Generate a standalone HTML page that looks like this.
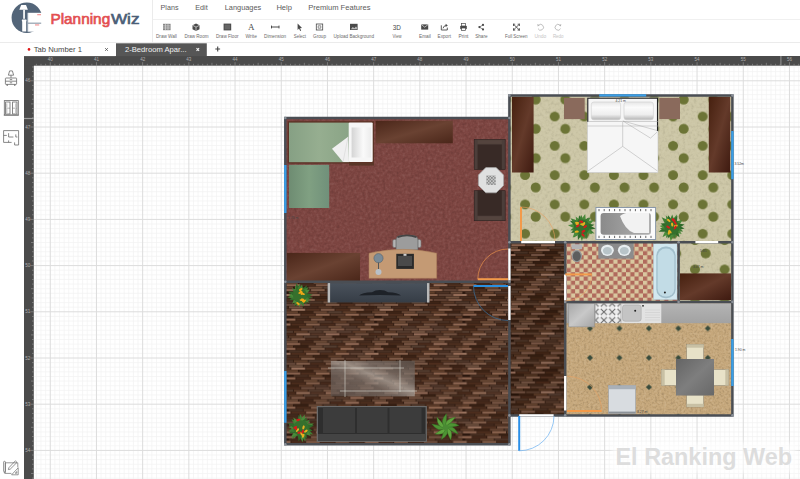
<!DOCTYPE html>
<html><head><meta charset="utf-8"><title>PlanningWiz</title>
<style>
html,body{margin:0;padding:0;width:800px;height:479px;overflow:hidden;background:#fff}
svg{display:block;position:absolute;left:0;top:0}
text{font-family:"Liberation Sans",sans-serif}
</style></head><body>
<svg width="800" height="479" viewBox="0 0 800 479">
<defs>

<pattern id="dots" patternUnits="userSpaceOnUse" x="525.1" y="175.1" width="29.6" height="29.3">
<circle cx="0" cy="0" r="5" fill="#6c7436"/><circle cx="29.6" cy="0" r="5" fill="#6c7436"/><circle cx="0" cy="29.3" r="5" fill="#6c7436"/><circle cx="29.6" cy="29.3" r="5" fill="#6c7436"/>
<circle cx="10.6" cy="12.4" r="5" fill="#6c7436"/>
</pattern>
<pattern id="dots2" patternUnits="userSpaceOnUse" x="695" y="269.4" width="29.6" height="29.3">
<circle cx="0" cy="0" r="5" fill="#6c7436"/><circle cx="29.6" cy="0" r="5" fill="#6c7436"/><circle cx="0" cy="29.3" r="5" fill="#6c7436"/><circle cx="29.6" cy="29.3" r="5" fill="#6c7436"/>
<circle cx="10.7" cy="13.4" r="5" fill="#6c7436"/><circle cx="10.7" cy="-15.9" r="5" fill="#6c7436"/>
</pattern>
<pattern id="check" patternUnits="userSpaceOnUse" x="566.66" y="238.31" width="8.48" height="8.48">
<rect width="8.48" height="8.48" fill="#b06a5c"/><rect width="4.24" height="4.24" fill="#d9c79f"/><rect x="4.24" y="4.24" width="4.24" height="4.24" fill="#d9c79f"/>
</pattern>
<pattern id="sand" patternUnits="userSpaceOnUse" x="590" y="328.4" width="29.45" height="29.4">

<path d="M0 -3 L3 0 L0 3 L-3 0Z M29.45 -3 L32.45 0 L29.45 3 L26.45 0Z M0 26.4 L3 29.4 L0 32.4 L-3 29.4Z M29.45 26.4 L32.45 29.4 L29.45 32.4 L26.45 29.4Z" fill="#3a4c3c"/>
</pattern>
<pattern id="parq" patternUnits="userSpaceOnUse" x="286" y="284" width="88.19999999999999" height="58.8"><rect width="88.19999999999999" height="58.8" fill="#2a170e"/><rect x="-29.00" y="0.20" width="13.9" height="2.10" fill="#7a5745"/><rect x="-14.30" y="0.20" width="13.9" height="2.10" fill="#513222"/><rect x="-21.65" y="2.65" width="13.9" height="2.10" fill="#3c2315"/><rect x="-6.95" y="2.65" width="13.9" height="2.10" fill="#62402c"/><rect x="0.40" y="0.20" width="13.9" height="2.10" fill="#8d6550"/><rect x="15.10" y="0.20" width="13.9" height="2.10" fill="#472a1b"/><rect x="7.75" y="2.65" width="13.9" height="2.10" fill="#372013"/><rect x="22.45" y="2.65" width="13.9" height="2.10" fill="#6a4a37"/><rect x="29.80" y="0.20" width="13.9" height="2.10" fill="#7b5846"/><rect x="44.50" y="0.20" width="13.9" height="2.10" fill="#4a2b1c"/><rect x="37.15" y="2.65" width="13.9" height="2.10" fill="#543e31"/><rect x="51.85" y="2.65" width="13.9" height="2.10" fill="#5e3c29"/><rect x="59.20" y="0.20" width="13.9" height="2.10" fill="#966d58"/><rect x="73.90" y="0.20" width="13.9" height="2.10" fill="#4e2f1f"/><rect x="66.55" y="2.65" width="13.9" height="2.10" fill="#452c1f"/><rect x="81.25" y="2.65" width="13.9" height="2.10" fill="#573826"/><rect x="88.60" y="0.20" width="13.9" height="2.10" fill="#8e6550"/><rect x="103.30" y="0.20" width="13.9" height="2.10" fill="#5e4132"/><rect x="95.95" y="2.65" width="13.9" height="2.10" fill="#402719"/><rect x="110.65" y="2.65" width="13.9" height="2.10" fill="#664633"/><rect x="-4.50" y="5.10" width="13.9" height="2.10" fill="#8f6651"/><rect x="10.20" y="5.10" width="13.9" height="2.10" fill="#472a1b"/><rect x="2.85" y="7.55" width="13.9" height="2.10" fill="#4a3225"/><rect x="17.55" y="7.55" width="13.9" height="2.10" fill="#613f2c"/><rect x="24.90" y="5.10" width="13.9" height="2.10" fill="#7d5a47"/><rect x="39.60" y="5.10" width="13.9" height="2.10" fill="#46291b"/><rect x="32.25" y="7.55" width="13.9" height="2.10" fill="#4f372b"/><rect x="46.95" y="7.55" width="13.9" height="2.10" fill="#5e3d29"/><rect x="54.30" y="5.10" width="13.9" height="2.10" fill="#926852"/><rect x="69.00" y="5.10" width="13.9" height="2.10" fill="#5e4133"/><rect x="61.65" y="7.55" width="13.9" height="2.10" fill="#493023"/><rect x="76.35" y="7.55" width="13.9" height="2.10" fill="#6d4d3b"/><rect x="83.70" y="5.10" width="13.9" height="2.10" fill="#825d49"/><rect x="98.40" y="5.10" width="13.9" height="2.10" fill="#5b3d2f"/><rect x="91.05" y="7.55" width="13.9" height="2.10" fill="#3d2315"/><rect x="105.75" y="7.55" width="13.9" height="2.10" fill="#6d4e3c"/><rect x="113.10" y="5.10" width="13.9" height="2.10" fill="#986f5a"/><rect x="127.80" y="5.10" width="13.9" height="2.10" fill="#472a1b"/><rect x="120.45" y="7.55" width="13.9" height="2.10" fill="#392114"/><rect x="135.15" y="7.55" width="13.9" height="2.10" fill="#593926"/><rect x="-9.40" y="10.00" width="13.9" height="2.10" fill="#9b745f"/><rect x="5.30" y="10.00" width="13.9" height="2.10" fill="#4d2d1d"/><rect x="-2.05" y="12.45" width="13.9" height="2.10" fill="#452c1e"/><rect x="12.65" y="12.45" width="13.9" height="2.10" fill="#5a3a27"/><rect x="20.00" y="10.00" width="13.9" height="2.10" fill="#87614d"/><rect x="34.70" y="10.00" width="13.9" height="2.10" fill="#4c2d1d"/><rect x="27.35" y="12.45" width="13.9" height="2.10" fill="#3c2315"/><rect x="42.05" y="12.45" width="13.9" height="2.10" fill="#613f2b"/><rect x="49.40" y="10.00" width="13.9" height="2.10" fill="#8b634f"/><rect x="64.10" y="10.00" width="13.9" height="2.10" fill="#5f4234"/><rect x="56.75" y="12.45" width="13.9" height="2.10" fill="#472e21"/><rect x="71.45" y="12.45" width="13.9" height="2.10" fill="#6d4e3b"/><rect x="78.80" y="10.00" width="13.9" height="2.10" fill="#976e59"/><rect x="93.50" y="10.00" width="13.9" height="2.10" fill="#624638"/><rect x="86.15" y="12.45" width="13.9" height="2.10" fill="#472e21"/><rect x="100.85" y="12.45" width="13.9" height="2.10" fill="#573826"/><rect x="108.20" y="10.00" width="13.9" height="2.10" fill="#976f59"/><rect x="122.90" y="10.00" width="13.9" height="2.10" fill="#614537"/><rect x="115.55" y="12.45" width="13.9" height="2.10" fill="#51392d"/><rect x="130.25" y="12.45" width="13.9" height="2.10" fill="#603f2b"/><rect x="-14.30" y="14.90" width="13.9" height="2.10" fill="#916852"/><rect x="0.40" y="14.90" width="13.9" height="2.10" fill="#492b1c"/><rect x="-6.95" y="17.35" width="13.9" height="2.10" fill="#4e3629"/><rect x="7.75" y="17.35" width="13.9" height="2.10" fill="#603f2b"/><rect x="15.10" y="14.90" width="13.9" height="2.10" fill="#7c5946"/><rect x="29.80" y="14.90" width="13.9" height="2.10" fill="#472a1b"/><rect x="22.45" y="17.35" width="13.9" height="2.10" fill="#4e372a"/><rect x="37.15" y="17.35" width="13.9" height="2.10" fill="#6f503e"/><rect x="44.50" y="14.90" width="13.9" height="2.10" fill="#735241"/><rect x="59.20" y="14.90" width="13.9" height="2.10" fill="#5b3d2f"/><rect x="51.85" y="17.35" width="13.9" height="2.10" fill="#3d2315"/><rect x="66.55" y="17.35" width="13.9" height="2.10" fill="#573826"/><rect x="73.90" y="14.90" width="13.9" height="2.10" fill="#7d5947"/><rect x="88.60" y="14.90" width="13.9" height="2.10" fill="#5a3c2d"/><rect x="81.25" y="17.35" width="13.9" height="2.10" fill="#4f382b"/><rect x="95.95" y="17.35" width="13.9" height="2.10" fill="#553725"/><rect x="103.30" y="14.90" width="13.9" height="2.10" fill="#8d6450"/><rect x="118.00" y="14.90" width="13.9" height="2.10" fill="#46291b"/><rect x="110.65" y="17.35" width="13.9" height="2.10" fill="#493023"/><rect x="125.35" y="17.35" width="13.9" height="2.10" fill="#5b3b28"/><rect x="-19.20" y="19.80" width="13.9" height="2.10" fill="#98705a"/><rect x="-4.50" y="19.80" width="13.9" height="2.10" fill="#624638"/><rect x="-11.85" y="22.25" width="13.9" height="2.10" fill="#402618"/><rect x="2.85" y="22.25" width="13.9" height="2.10" fill="#6f513f"/><rect x="10.20" y="19.80" width="13.9" height="2.10" fill="#7e5a47"/><rect x="24.90" y="19.80" width="13.9" height="2.10" fill="#472a1b"/><rect x="17.55" y="22.25" width="13.9" height="2.10" fill="#442a1d"/><rect x="32.25" y="22.25" width="13.9" height="2.10" fill="#553625"/><rect x="39.60" y="19.80" width="13.9" height="2.10" fill="#785644"/><rect x="54.30" y="19.80" width="13.9" height="2.10" fill="#4d2d1d"/><rect x="46.95" y="22.25" width="13.9" height="2.10" fill="#442b1d"/><rect x="61.65" y="22.25" width="13.9" height="2.10" fill="#573826"/><rect x="69.00" y="19.80" width="13.9" height="2.10" fill="#715040"/><rect x="83.70" y="19.80" width="13.9" height="2.10" fill="#5e4132"/><rect x="76.35" y="22.25" width="13.9" height="2.10" fill="#3c2215"/><rect x="91.05" y="22.25" width="13.9" height="2.10" fill="#6e4f3d"/><rect x="98.40" y="19.80" width="13.9" height="2.10" fill="#98705b"/><rect x="113.10" y="19.80" width="13.9" height="2.10" fill="#4c2d1d"/><rect x="105.75" y="22.25" width="13.9" height="2.10" fill="#3e2416"/><rect x="120.45" y="22.25" width="13.9" height="2.10" fill="#5f3d29"/><rect x="-24.10" y="24.70" width="13.9" height="2.10" fill="#8e6650"/><rect x="-9.40" y="24.70" width="13.9" height="2.10" fill="#533424"/><rect x="-16.75" y="27.15" width="13.9" height="2.10" fill="#42291b"/><rect x="-2.05" y="27.15" width="13.9" height="2.10" fill="#62412d"/><rect x="5.30" y="24.70" width="13.9" height="2.10" fill="#9a735e"/><rect x="20.00" y="24.70" width="13.9" height="2.10" fill="#503020"/><rect x="12.65" y="27.15" width="13.9" height="2.10" fill="#3d2315"/><rect x="27.35" y="27.15" width="13.9" height="2.10" fill="#664532"/><rect x="34.70" y="24.70" width="13.9" height="2.10" fill="#7a5745"/><rect x="49.40" y="24.70" width="13.9" height="2.10" fill="#4b2c1c"/><rect x="42.05" y="27.15" width="13.9" height="2.10" fill="#543d30"/><rect x="56.75" y="27.15" width="13.9" height="2.10" fill="#5f3d29"/><rect x="64.10" y="24.70" width="13.9" height="2.10" fill="#89624e"/><rect x="78.80" y="24.70" width="13.9" height="2.10" fill="#46291b"/><rect x="71.45" y="27.15" width="13.9" height="2.10" fill="#3d2315"/><rect x="86.15" y="27.15" width="13.9" height="2.10" fill="#613f2b"/><rect x="93.50" y="24.70" width="13.9" height="2.10" fill="#6f503f"/><rect x="108.20" y="24.70" width="13.9" height="2.10" fill="#543525"/><rect x="100.85" y="27.15" width="13.9" height="2.10" fill="#452c1f"/><rect x="115.55" y="27.15" width="13.9" height="2.10" fill="#553725"/><rect x="0.40" y="29.60" width="13.9" height="2.10" fill="#8d6550"/><rect x="15.10" y="29.60" width="13.9" height="2.10" fill="#4e2e1e"/><rect x="7.75" y="32.05" width="13.9" height="2.10" fill="#472e21"/><rect x="22.45" y="32.05" width="13.9" height="2.10" fill="#5b3b28"/><rect x="29.80" y="29.60" width="13.9" height="2.10" fill="#916852"/><rect x="44.50" y="29.60" width="13.9" height="2.10" fill="#593b2c"/><rect x="37.15" y="32.05" width="13.9" height="2.10" fill="#382013"/><rect x="51.85" y="32.05" width="13.9" height="2.10" fill="#553725"/><rect x="59.20" y="29.60" width="13.9" height="2.10" fill="#906751"/><rect x="73.90" y="29.60" width="13.9" height="2.10" fill="#614537"/><rect x="66.55" y="32.05" width="13.9" height="2.10" fill="#3b2215"/><rect x="81.25" y="32.05" width="13.9" height="2.10" fill="#5e3c29"/><rect x="88.60" y="29.60" width="13.9" height="2.10" fill="#8b644f"/><rect x="103.30" y="29.60" width="13.9" height="2.10" fill="#4b2c1d"/><rect x="95.95" y="32.05" width="13.9" height="2.10" fill="#3c2315"/><rect x="110.65" y="32.05" width="13.9" height="2.10" fill="#5b3a27"/><rect x="118.00" y="29.60" width="13.9" height="2.10" fill="#815c49"/><rect x="132.70" y="29.60" width="13.9" height="2.10" fill="#533424"/><rect x="125.35" y="32.05" width="13.9" height="2.10" fill="#3b2215"/><rect x="140.05" y="32.05" width="13.9" height="2.10" fill="#5c3b28"/><rect x="-4.50" y="34.50" width="13.9" height="2.10" fill="#946a54"/><rect x="10.20" y="34.50" width="13.9" height="2.10" fill="#46291b"/><rect x="2.85" y="36.95" width="13.9" height="2.10" fill="#42291b"/><rect x="17.55" y="36.95" width="13.9" height="2.10" fill="#664632"/><rect x="24.90" y="34.50" width="13.9" height="2.10" fill="#7e5a47"/><rect x="39.60" y="34.50" width="13.9" height="2.10" fill="#4a2b1c"/><rect x="32.25" y="36.95" width="13.9" height="2.10" fill="#4c3427"/><rect x="46.95" y="36.95" width="13.9" height="2.10" fill="#593927"/><rect x="54.30" y="34.50" width="13.9" height="2.10" fill="#785644"/><rect x="69.00" y="34.50" width="13.9" height="2.10" fill="#4d2d1d"/><rect x="61.65" y="36.95" width="13.9" height="2.10" fill="#482f22"/><rect x="76.35" y="36.95" width="13.9" height="2.10" fill="#563725"/><rect x="83.70" y="34.50" width="13.9" height="2.10" fill="#7e5a47"/><rect x="98.40" y="34.50" width="13.9" height="2.10" fill="#4b2c1d"/><rect x="91.05" y="36.95" width="13.9" height="2.10" fill="#4e3629"/><rect x="105.75" y="36.95" width="13.9" height="2.10" fill="#5d3c29"/><rect x="113.10" y="34.50" width="13.9" height="2.10" fill="#976e59"/><rect x="127.80" y="34.50" width="13.9" height="2.10" fill="#492b1c"/><rect x="120.45" y="36.95" width="13.9" height="2.10" fill="#3c2315"/><rect x="135.15" y="36.95" width="13.9" height="2.10" fill="#63422e"/><rect x="-9.40" y="39.40" width="13.9" height="2.10" fill="#98705b"/><rect x="5.30" y="39.40" width="13.9" height="2.10" fill="#4d2d1d"/><rect x="-2.05" y="41.85" width="13.9" height="2.10" fill="#3a2214"/><rect x="12.65" y="41.85" width="13.9" height="2.10" fill="#573826"/><rect x="20.00" y="39.40" width="13.9" height="2.10" fill="#88624d"/><rect x="34.70" y="39.40" width="13.9" height="2.10" fill="#492b1c"/><rect x="27.35" y="41.85" width="13.9" height="2.10" fill="#4c3428"/><rect x="42.05" y="41.85" width="13.9" height="2.10" fill="#6a4a37"/><rect x="49.40" y="39.40" width="13.9" height="2.10" fill="#775544"/><rect x="64.10" y="39.40" width="13.9" height="2.10" fill="#4a2c1c"/><rect x="56.75" y="41.85" width="13.9" height="2.10" fill="#4c3428"/><rect x="71.45" y="41.85" width="13.9" height="2.10" fill="#63422e"/><rect x="78.80" y="39.40" width="13.9" height="2.10" fill="#956c56"/><rect x="93.50" y="39.40" width="13.9" height="2.10" fill="#4c2c1d"/><rect x="86.15" y="41.85" width="13.9" height="2.10" fill="#392114"/><rect x="100.85" y="41.85" width="13.9" height="2.10" fill="#5a3a27"/><rect x="108.20" y="39.40" width="13.9" height="2.10" fill="#956b56"/><rect x="122.90" y="39.40" width="13.9" height="2.10" fill="#4a2c1c"/><rect x="115.55" y="41.85" width="13.9" height="2.10" fill="#3c2315"/><rect x="130.25" y="41.85" width="13.9" height="2.10" fill="#5d3c28"/><rect x="-14.30" y="44.30" width="13.9" height="2.10" fill="#835e4a"/><rect x="0.40" y="44.30" width="13.9" height="2.10" fill="#4d2d1d"/><rect x="-6.95" y="46.75" width="13.9" height="2.10" fill="#513a2d"/><rect x="7.75" y="46.75" width="13.9" height="2.10" fill="#573826"/><rect x="15.10" y="44.30" width="13.9" height="2.10" fill="#6f4f3f"/><rect x="29.80" y="44.30" width="13.9" height="2.10" fill="#614436"/><rect x="22.45" y="46.75" width="13.9" height="2.10" fill="#50382b"/><rect x="37.15" y="46.75" width="13.9" height="2.10" fill="#6f503e"/><rect x="44.50" y="44.30" width="13.9" height="2.10" fill="#845e4b"/><rect x="59.20" y="44.30" width="13.9" height="2.10" fill="#614436"/><rect x="51.85" y="46.75" width="13.9" height="2.10" fill="#523a2e"/><rect x="66.55" y="46.75" width="13.9" height="2.10" fill="#593927"/><rect x="73.90" y="44.30" width="13.9" height="2.10" fill="#936953"/><rect x="88.60" y="44.30" width="13.9" height="2.10" fill="#5c3f30"/><rect x="81.25" y="46.75" width="13.9" height="2.10" fill="#462e20"/><rect x="95.95" y="46.75" width="13.9" height="2.10" fill="#5f3d29"/><rect x="103.30" y="44.30" width="13.9" height="2.10" fill="#7d5947"/><rect x="118.00" y="44.30" width="13.9" height="2.10" fill="#4c2c1d"/><rect x="110.65" y="46.75" width="13.9" height="2.10" fill="#3a2214"/><rect x="125.35" y="46.75" width="13.9" height="2.10" fill="#553725"/><rect x="-19.20" y="49.20" width="13.9" height="2.10" fill="#8b644f"/><rect x="-4.50" y="49.20" width="13.9" height="2.10" fill="#4b2c1c"/><rect x="-11.85" y="51.65" width="13.9" height="2.10" fill="#4d3528"/><rect x="2.85" y="51.65" width="13.9" height="2.10" fill="#553725"/><rect x="10.20" y="49.20" width="13.9" height="2.10" fill="#99715c"/><rect x="24.90" y="49.20" width="13.9" height="2.10" fill="#573829"/><rect x="17.55" y="51.65" width="13.9" height="2.10" fill="#513a2e"/><rect x="32.25" y="51.65" width="13.9" height="2.10" fill="#6c4c3a"/><rect x="39.60" y="49.20" width="13.9" height="2.10" fill="#99705c"/><rect x="54.30" y="49.20" width="13.9" height="2.10" fill="#523324"/><rect x="46.95" y="51.65" width="13.9" height="2.10" fill="#372013"/><rect x="61.65" y="51.65" width="13.9" height="2.10" fill="#664633"/><rect x="69.00" y="49.20" width="13.9" height="2.10" fill="#775543"/><rect x="83.70" y="49.20" width="13.9" height="2.10" fill="#4b2c1c"/><rect x="76.35" y="51.65" width="13.9" height="2.10" fill="#462e20"/><rect x="91.05" y="51.65" width="13.9" height="2.10" fill="#5f3d29"/><rect x="98.40" y="49.20" width="13.9" height="2.10" fill="#835d4a"/><rect x="113.10" y="49.20" width="13.9" height="2.10" fill="#604435"/><rect x="105.75" y="51.65" width="13.9" height="2.10" fill="#442b1e"/><rect x="120.45" y="51.65" width="13.9" height="2.10" fill="#5b3b28"/><rect x="-24.10" y="54.10" width="13.9" height="2.10" fill="#7b5845"/><rect x="-9.40" y="54.10" width="13.9" height="2.10" fill="#5d4032"/><rect x="-16.75" y="56.55" width="13.9" height="2.10" fill="#3e2517"/><rect x="-2.05" y="56.55" width="13.9" height="2.10" fill="#684835"/><rect x="5.30" y="54.10" width="13.9" height="2.10" fill="#805b48"/><rect x="20.00" y="54.10" width="13.9" height="2.10" fill="#492b1c"/><rect x="12.65" y="56.55" width="13.9" height="2.10" fill="#41271a"/><rect x="27.35" y="56.55" width="13.9" height="2.10" fill="#694936"/><rect x="34.70" y="54.10" width="13.9" height="2.10" fill="#775543"/><rect x="49.40" y="54.10" width="13.9" height="2.10" fill="#5b3d2e"/><rect x="42.05" y="56.55" width="13.9" height="2.10" fill="#513a2d"/><rect x="56.75" y="56.55" width="13.9" height="2.10" fill="#694936"/><rect x="64.10" y="54.10" width="13.9" height="2.10" fill="#966d57"/><rect x="78.80" y="54.10" width="13.9" height="2.10" fill="#46291b"/><rect x="71.45" y="56.55" width="13.9" height="2.10" fill="#452c1e"/><rect x="86.15" y="56.55" width="13.9" height="2.10" fill="#6b4b38"/><rect x="93.50" y="54.10" width="13.9" height="2.10" fill="#715140"/><rect x="108.20" y="54.10" width="13.9" height="2.10" fill="#4a2c1c"/><rect x="100.85" y="56.55" width="13.9" height="2.10" fill="#3b2215"/><rect x="115.55" y="56.55" width="13.9" height="2.10" fill="#5f3d29"/></pattern>
<pattern id="parq2" patternUnits="userSpaceOnUse" x="511" y="244" width="88.19999999999999" height="58.8"><rect width="88.19999999999999" height="58.8" fill="#26140a"/><rect x="-29.00" y="0.20" width="13.9" height="2.10" fill="#855f4c"/><rect x="-14.30" y="0.20" width="13.9" height="2.10" fill="#513526"/><rect x="-21.65" y="2.65" width="13.9" height="2.10" fill="#463023"/><rect x="-6.95" y="2.65" width="13.9" height="2.10" fill="#684b38"/><rect x="0.40" y="0.20" width="13.9" height="2.10" fill="#8b634f"/><rect x="15.10" y="0.20" width="13.9" height="2.10" fill="#593e2f"/><rect x="7.75" y="2.65" width="13.9" height="2.10" fill="#321d10"/><rect x="22.45" y="2.65" width="13.9" height="2.10" fill="#583825"/><rect x="29.80" y="0.20" width="13.9" height="2.10" fill="#936d5a"/><rect x="44.50" y="0.20" width="13.9" height="2.10" fill="#4d3121"/><rect x="37.15" y="2.65" width="13.9" height="2.10" fill="#4b3529"/><rect x="51.85" y="2.65" width="13.9" height="2.10" fill="#513422"/><rect x="59.20" y="0.20" width="13.9" height="2.10" fill="#7e5a48"/><rect x="73.90" y="0.20" width="13.9" height="2.10" fill="#422616"/><rect x="66.55" y="2.65" width="13.9" height="2.10" fill="#3b2416"/><rect x="81.25" y="2.65" width="13.9" height="2.10" fill="#5b3b27"/><rect x="88.60" y="0.20" width="13.9" height="2.10" fill="#694b3c"/><rect x="103.30" y="0.20" width="13.9" height="2.10" fill="#422516"/><rect x="95.95" y="2.65" width="13.9" height="2.10" fill="#351e11"/><rect x="110.65" y="2.65" width="13.9" height="2.10" fill="#674a37"/><rect x="-4.50" y="5.10" width="13.9" height="2.10" fill="#8c6450"/><rect x="10.20" y="5.10" width="13.9" height="2.10" fill="#412516"/><rect x="2.85" y="7.55" width="13.9" height="2.10" fill="#463023"/><rect x="17.55" y="7.55" width="13.9" height="2.10" fill="#513422"/><rect x="24.90" y="5.10" width="13.9" height="2.10" fill="#855f4c"/><rect x="39.60" y="5.10" width="13.9" height="2.10" fill="#402516"/><rect x="32.25" y="7.55" width="13.9" height="2.10" fill="#321c10"/><rect x="46.95" y="7.55" width="13.9" height="2.10" fill="#654835"/><rect x="54.30" y="5.10" width="13.9" height="2.10" fill="#725141"/><rect x="69.00" y="5.10" width="13.9" height="2.10" fill="#422516"/><rect x="61.65" y="7.55" width="13.9" height="2.10" fill="#4f392d"/><rect x="76.35" y="7.55" width="13.9" height="2.10" fill="#654835"/><rect x="83.70" y="5.10" width="13.9" height="2.10" fill="#765443"/><rect x="98.40" y="5.10" width="13.9" height="2.10" fill="#5a3f31"/><rect x="91.05" y="7.55" width="13.9" height="2.10" fill="#3b2416"/><rect x="105.75" y="7.55" width="13.9" height="2.10" fill="#5e3f2c"/><rect x="113.10" y="5.10" width="13.9" height="2.10" fill="#725141"/><rect x="127.80" y="5.10" width="13.9" height="2.10" fill="#593f30"/><rect x="120.45" y="7.55" width="13.9" height="2.10" fill="#422b1e"/><rect x="135.15" y="7.55" width="13.9" height="2.10" fill="#694c3a"/><rect x="-9.40" y="10.00" width="13.9" height="2.10" fill="#916a57"/><rect x="5.30" y="10.00" width="13.9" height="2.10" fill="#432617"/><rect x="-2.05" y="12.45" width="13.9" height="2.10" fill="#361f11"/><rect x="12.65" y="12.45" width="13.9" height="2.10" fill="#523522"/><rect x="20.00" y="10.00" width="13.9" height="2.10" fill="#6f4f3f"/><rect x="34.70" y="10.00" width="13.9" height="2.10" fill="#402415"/><rect x="27.35" y="12.45" width="13.9" height="2.10" fill="#361e11"/><rect x="42.05" y="12.45" width="13.9" height="2.10" fill="#5c3c28"/><rect x="49.40" y="10.00" width="13.9" height="2.10" fill="#694b3c"/><rect x="64.10" y="10.00" width="13.9" height="2.10" fill="#4f3223"/><rect x="56.75" y="12.45" width="13.9" height="2.10" fill="#361f11"/><rect x="71.45" y="12.45" width="13.9" height="2.10" fill="#553624"/><rect x="78.80" y="10.00" width="13.9" height="2.10" fill="#8e6753"/><rect x="93.50" y="10.00" width="13.9" height="2.10" fill="#472919"/><rect x="86.15" y="12.45" width="13.9" height="2.10" fill="#361f11"/><rect x="100.85" y="12.45" width="13.9" height="2.10" fill="#583925"/><rect x="108.20" y="10.00" width="13.9" height="2.10" fill="#89624e"/><rect x="122.90" y="10.00" width="13.9" height="2.10" fill="#3f2415"/><rect x="115.55" y="12.45" width="13.9" height="2.10" fill="#4e392d"/><rect x="130.25" y="12.45" width="13.9" height="2.10" fill="#4f3321"/><rect x="-14.30" y="14.90" width="13.9" height="2.10" fill="#8b634f"/><rect x="0.40" y="14.90" width="13.9" height="2.10" fill="#553a2b"/><rect x="-6.95" y="17.35" width="13.9" height="2.10" fill="#321c10"/><rect x="7.75" y="17.35" width="13.9" height="2.10" fill="#624431"/><rect x="15.10" y="14.90" width="13.9" height="2.10" fill="#795745"/><rect x="29.80" y="14.90" width="13.9" height="2.10" fill="#4b2d1e"/><rect x="22.45" y="17.35" width="13.9" height="2.10" fill="#321c10"/><rect x="37.15" y="17.35" width="13.9" height="2.10" fill="#503321"/><rect x="44.50" y="14.90" width="13.9" height="2.10" fill="#715040"/><rect x="59.20" y="14.90" width="13.9" height="2.10" fill="#5a3f31"/><rect x="51.85" y="17.35" width="13.9" height="2.10" fill="#341e10"/><rect x="66.55" y="17.35" width="13.9" height="2.10" fill="#614330"/><rect x="73.90" y="14.90" width="13.9" height="2.10" fill="#926c59"/><rect x="88.60" y="14.90" width="13.9" height="2.10" fill="#593f30"/><rect x="81.25" y="17.35" width="13.9" height="2.10" fill="#361f11"/><rect x="95.95" y="17.35" width="13.9" height="2.10" fill="#563724"/><rect x="103.30" y="14.90" width="13.9" height="2.10" fill="#815c49"/><rect x="118.00" y="14.90" width="13.9" height="2.10" fill="#533728"/><rect x="110.65" y="17.35" width="13.9" height="2.10" fill="#331d10"/><rect x="125.35" y="17.35" width="13.9" height="2.10" fill="#61422f"/><rect x="-19.20" y="19.80" width="13.9" height="2.10" fill="#8d6652"/><rect x="-4.50" y="19.80" width="13.9" height="2.10" fill="#563b2c"/><rect x="-11.85" y="22.25" width="13.9" height="2.10" fill="#321d10"/><rect x="2.85" y="22.25" width="13.9" height="2.10" fill="#684b39"/><rect x="10.20" y="19.80" width="13.9" height="2.10" fill="#6d4e3e"/><rect x="24.90" y="19.80" width="13.9" height="2.10" fill="#442617"/><rect x="17.55" y="22.25" width="13.9" height="2.10" fill="#3e271a"/><rect x="32.25" y="22.25" width="13.9" height="2.10" fill="#674a37"/><rect x="39.60" y="19.80" width="13.9" height="2.10" fill="#785644"/><rect x="54.30" y="19.80" width="13.9" height="2.10" fill="#593e2f"/><rect x="46.95" y="22.25" width="13.9" height="2.10" fill="#3b2416"/><rect x="61.65" y="22.25" width="13.9" height="2.10" fill="#553724"/><rect x="69.00" y="19.80" width="13.9" height="2.10" fill="#775544"/><rect x="83.70" y="19.80" width="13.9" height="2.10" fill="#412516"/><rect x="76.35" y="22.25" width="13.9" height="2.10" fill="#331d10"/><rect x="91.05" y="22.25" width="13.9" height="2.10" fill="#523422"/><rect x="98.40" y="19.80" width="13.9" height="2.10" fill="#88614e"/><rect x="113.10" y="19.80" width="13.9" height="2.10" fill="#5c4133"/><rect x="105.75" y="22.25" width="13.9" height="2.10" fill="#341d10"/><rect x="120.45" y="22.25" width="13.9" height="2.10" fill="#503321"/><rect x="-24.10" y="24.70" width="13.9" height="2.10" fill="#946f5d"/><rect x="-9.40" y="24.70" width="13.9" height="2.10" fill="#492b1c"/><rect x="-16.75" y="27.15" width="13.9" height="2.10" fill="#371f11"/><rect x="-2.05" y="27.15" width="13.9" height="2.10" fill="#533623"/><rect x="5.30" y="24.70" width="13.9" height="2.10" fill="#845e4b"/><rect x="20.00" y="24.70" width="13.9" height="2.10" fill="#55392a"/><rect x="12.65" y="27.15" width="13.9" height="2.10" fill="#382012"/><rect x="27.35" y="27.15" width="13.9" height="2.10" fill="#573824"/><rect x="34.70" y="24.70" width="13.9" height="2.10" fill="#6b4c3d"/><rect x="49.40" y="24.70" width="13.9" height="2.10" fill="#583d2f"/><rect x="42.05" y="27.15" width="13.9" height="2.10" fill="#321d10"/><rect x="56.75" y="27.15" width="13.9" height="2.10" fill="#583925"/><rect x="64.10" y="24.70" width="13.9" height="2.10" fill="#8f6854"/><rect x="78.80" y="24.70" width="13.9" height="2.10" fill="#412516"/><rect x="71.45" y="27.15" width="13.9" height="2.10" fill="#442d20"/><rect x="86.15" y="27.15" width="13.9" height="2.10" fill="#684b39"/><rect x="93.50" y="24.70" width="13.9" height="2.10" fill="#865f4c"/><rect x="108.20" y="24.70" width="13.9" height="2.10" fill="#533728"/><rect x="100.85" y="27.15" width="13.9" height="2.10" fill="#331d10"/><rect x="115.55" y="27.15" width="13.9" height="2.10" fill="#573825"/><rect x="0.40" y="29.60" width="13.9" height="2.10" fill="#6f4f3f"/><rect x="15.10" y="29.60" width="13.9" height="2.10" fill="#553a2b"/><rect x="7.75" y="32.05" width="13.9" height="2.10" fill="#361e11"/><rect x="22.45" y="32.05" width="13.9" height="2.10" fill="#583825"/><rect x="29.80" y="29.60" width="13.9" height="2.10" fill="#95705d"/><rect x="44.50" y="29.60" width="13.9" height="2.10" fill="#563a2c"/><rect x="37.15" y="32.05" width="13.9" height="2.10" fill="#4e392d"/><rect x="51.85" y="32.05" width="13.9" height="2.10" fill="#583825"/><rect x="59.20" y="29.60" width="13.9" height="2.10" fill="#7f5b48"/><rect x="73.90" y="29.60" width="13.9" height="2.10" fill="#513525"/><rect x="66.55" y="32.05" width="13.9" height="2.10" fill="#392113"/><rect x="81.25" y="32.05" width="13.9" height="2.10" fill="#543623"/><rect x="88.60" y="29.60" width="13.9" height="2.10" fill="#7b5846"/><rect x="103.30" y="29.60" width="13.9" height="2.10" fill="#412516"/><rect x="95.95" y="32.05" width="13.9" height="2.10" fill="#371f11"/><rect x="110.65" y="32.05" width="13.9" height="2.10" fill="#6a4d3b"/><rect x="118.00" y="29.60" width="13.9" height="2.10" fill="#936e5b"/><rect x="132.70" y="29.60" width="13.9" height="2.10" fill="#4d3020"/><rect x="125.35" y="32.05" width="13.9" height="2.10" fill="#392214"/><rect x="140.05" y="32.05" width="13.9" height="2.10" fill="#553724"/><rect x="-4.50" y="34.50" width="13.9" height="2.10" fill="#6d4d3e"/><rect x="10.20" y="34.50" width="13.9" height="2.10" fill="#432617"/><rect x="2.85" y="36.95" width="13.9" height="2.10" fill="#463023"/><rect x="17.55" y="36.95" width="13.9" height="2.10" fill="#654735"/><rect x="24.90" y="34.50" width="13.9" height="2.10" fill="#795645"/><rect x="39.60" y="34.50" width="13.9" height="2.10" fill="#533728"/><rect x="32.25" y="36.95" width="13.9" height="2.10" fill="#462f22"/><rect x="46.95" y="36.95" width="13.9" height="2.10" fill="#5f402d"/><rect x="54.30" y="34.50" width="13.9" height="2.10" fill="#87604d"/><rect x="69.00" y="34.50" width="13.9" height="2.10" fill="#523627"/><rect x="61.65" y="36.95" width="13.9" height="2.10" fill="#361f11"/><rect x="76.35" y="36.95" width="13.9" height="2.10" fill="#5f402d"/><rect x="83.70" y="34.50" width="13.9" height="2.10" fill="#755443"/><rect x="98.40" y="34.50" width="13.9" height="2.10" fill="#472919"/><rect x="91.05" y="36.95" width="13.9" height="2.10" fill="#452f22"/><rect x="105.75" y="36.95" width="13.9" height="2.10" fill="#5f402c"/><rect x="113.10" y="34.50" width="13.9" height="2.10" fill="#765443"/><rect x="127.80" y="34.50" width="13.9" height="2.10" fill="#593f30"/><rect x="120.45" y="36.95" width="13.9" height="2.10" fill="#40291c"/><rect x="135.15" y="36.95" width="13.9" height="2.10" fill="#5b3b27"/><rect x="-9.40" y="39.40" width="13.9" height="2.10" fill="#694b3c"/><rect x="5.30" y="39.40" width="13.9" height="2.10" fill="#492c1c"/><rect x="-2.05" y="41.85" width="13.9" height="2.10" fill="#351e11"/><rect x="12.65" y="41.85" width="13.9" height="2.10" fill="#5e3f2c"/><rect x="20.00" y="39.40" width="13.9" height="2.10" fill="#7e5a48"/><rect x="34.70" y="39.40" width="13.9" height="2.10" fill="#54392a"/><rect x="27.35" y="41.85" width="13.9" height="2.10" fill="#40291c"/><rect x="42.05" y="41.85" width="13.9" height="2.10" fill="#634432"/><rect x="49.40" y="39.40" width="13.9" height="2.10" fill="#795645"/><rect x="64.10" y="39.40" width="13.9" height="2.10" fill="#4d3021"/><rect x="56.75" y="41.85" width="13.9" height="2.10" fill="#442d20"/><rect x="71.45" y="41.85" width="13.9" height="2.10" fill="#644633"/><rect x="78.80" y="39.40" width="13.9" height="2.10" fill="#795645"/><rect x="93.50" y="39.40" width="13.9" height="2.10" fill="#553a2b"/><rect x="86.15" y="41.85" width="13.9" height="2.10" fill="#4a3427"/><rect x="100.85" y="41.85" width="13.9" height="2.10" fill="#5f402c"/><rect x="108.20" y="39.40" width="13.9" height="2.10" fill="#946f5c"/><rect x="122.90" y="39.40" width="13.9" height="2.10" fill="#5a3f31"/><rect x="115.55" y="41.85" width="13.9" height="2.10" fill="#3a2315"/><rect x="130.25" y="41.85" width="13.9" height="2.10" fill="#593925"/><rect x="-14.30" y="44.30" width="13.9" height="2.10" fill="#705040"/><rect x="0.40" y="44.30" width="13.9" height="2.10" fill="#553a2b"/><rect x="-6.95" y="46.75" width="13.9" height="2.10" fill="#4d372b"/><rect x="7.75" y="46.75" width="13.9" height="2.10" fill="#583925"/><rect x="15.10" y="44.30" width="13.9" height="2.10" fill="#88614e"/><rect x="29.80" y="44.30" width="13.9" height="2.10" fill="#503425"/><rect x="22.45" y="46.75" width="13.9" height="2.10" fill="#442d20"/><rect x="37.15" y="46.75" width="13.9" height="2.10" fill="#523522"/><rect x="44.50" y="44.30" width="13.9" height="2.10" fill="#8c6551"/><rect x="59.20" y="44.30" width="13.9" height="2.10" fill="#4b2d1e"/><rect x="51.85" y="46.75" width="13.9" height="2.10" fill="#412a1d"/><rect x="66.55" y="46.75" width="13.9" height="2.10" fill="#573824"/><rect x="73.90" y="44.30" width="13.9" height="2.10" fill="#855f4c"/><rect x="88.60" y="44.30" width="13.9" height="2.10" fill="#533728"/><rect x="81.25" y="46.75" width="13.9" height="2.10" fill="#3f281b"/><rect x="95.95" y="46.75" width="13.9" height="2.10" fill="#60412e"/><rect x="103.30" y="44.30" width="13.9" height="2.10" fill="#6a4b3c"/><rect x="118.00" y="44.30" width="13.9" height="2.10" fill="#412516"/><rect x="110.65" y="46.75" width="13.9" height="2.10" fill="#371f11"/><rect x="125.35" y="46.75" width="13.9" height="2.10" fill="#5d3e2a"/><rect x="-19.20" y="49.20" width="13.9" height="2.10" fill="#735241"/><rect x="-4.50" y="49.20" width="13.9" height="2.10" fill="#4f3223"/><rect x="-11.85" y="51.65" width="13.9" height="2.10" fill="#3f281b"/><rect x="2.85" y="51.65" width="13.9" height="2.10" fill="#503321"/><rect x="10.20" y="49.20" width="13.9" height="2.10" fill="#7e5a48"/><rect x="24.90" y="49.20" width="13.9" height="2.10" fill="#422516"/><rect x="17.55" y="51.65" width="13.9" height="2.10" fill="#331d10"/><rect x="32.25" y="51.65" width="13.9" height="2.10" fill="#513422"/><rect x="39.60" y="49.20" width="13.9" height="2.10" fill="#775544"/><rect x="54.30" y="49.20" width="13.9" height="2.10" fill="#412516"/><rect x="46.95" y="51.65" width="13.9" height="2.10" fill="#341e10"/><rect x="61.65" y="51.65" width="13.9" height="2.10" fill="#4f3321"/><rect x="69.00" y="49.20" width="13.9" height="2.10" fill="#7e5a48"/><rect x="83.70" y="49.20" width="13.9" height="2.10" fill="#442717"/><rect x="76.35" y="51.65" width="13.9" height="2.10" fill="#3e271a"/><rect x="91.05" y="51.65" width="13.9" height="2.10" fill="#5b3b28"/><rect x="98.40" y="49.20" width="13.9" height="2.10" fill="#735242"/><rect x="113.10" y="49.20" width="13.9" height="2.10" fill="#583d2e"/><rect x="105.75" y="51.65" width="13.9" height="2.10" fill="#321c10"/><rect x="120.45" y="51.65" width="13.9" height="2.10" fill="#573824"/><rect x="-24.10" y="54.10" width="13.9" height="2.10" fill="#755443"/><rect x="-9.40" y="54.10" width="13.9" height="2.10" fill="#452717"/><rect x="-16.75" y="56.55" width="13.9" height="2.10" fill="#331d10"/><rect x="-2.05" y="56.55" width="13.9" height="2.10" fill="#644633"/><rect x="5.30" y="54.10" width="13.9" height="2.10" fill="#7a5745"/><rect x="20.00" y="54.10" width="13.9" height="2.10" fill="#3f2415"/><rect x="12.65" y="56.55" width="13.9" height="2.10" fill="#3e271a"/><rect x="27.35" y="56.55" width="13.9" height="2.10" fill="#513422"/><rect x="34.70" y="54.10" width="13.9" height="2.10" fill="#825c4a"/><rect x="49.40" y="54.10" width="13.9" height="2.10" fill="#442617"/><rect x="42.05" y="56.55" width="13.9" height="2.10" fill="#3d2618"/><rect x="56.75" y="56.55" width="13.9" height="2.10" fill="#684b39"/><rect x="64.10" y="54.10" width="13.9" height="2.10" fill="#8e6753"/><rect x="78.80" y="54.10" width="13.9" height="2.10" fill="#452717"/><rect x="71.45" y="56.55" width="13.9" height="2.10" fill="#473124"/><rect x="86.15" y="56.55" width="13.9" height="2.10" fill="#5d3e2a"/><rect x="93.50" y="54.10" width="13.9" height="2.10" fill="#7a5745"/><rect x="108.20" y="54.10" width="13.9" height="2.10" fill="#412516"/><rect x="100.85" y="56.55" width="13.9" height="2.10" fill="#3e2619"/><rect x="115.55" y="56.55" width="13.9" height="2.10" fill="#5a3a26"/></pattern>
<filter id="nzd2" x="0" y="0" width="100%" height="100%" color-interpolation-filters="sRGB"><feTurbulence type="fractalNoise" baseFrequency="0.35" numOctaves="2" seed="9"/><feColorMatrix type="matrix" values="0 0 0 0 0  0 0 0 0 0  0 0 0 0 0  0.32 0 0 0 -0.16"/></filter>
<filter id="nzl2" x="0" y="0" width="100%" height="100%" color-interpolation-filters="sRGB"><feTurbulence type="fractalNoise" baseFrequency="0.35" numOctaves="2" seed="9"/><feColorMatrix type="matrix" values="0 0 0 0 1  0 0 0 0 1  0 0 0 0 1  -0.22 0 0 0 0.11"/></filter>
<filter id="nzd3" x="0" y="0" width="100%" height="100%" color-interpolation-filters="sRGB"><feTurbulence type="fractalNoise" baseFrequency="0.35" numOctaves="2" seed="9"/><feColorMatrix type="matrix" values="0 0 0 0 0  0 0 0 0 0  0 0 0 0 0  0.2 0 0 0 -0.1"/></filter>
<filter id="nzl3" x="0" y="0" width="100%" height="100%" color-interpolation-filters="sRGB"><feTurbulence type="fractalNoise" baseFrequency="0.35" numOctaves="2" seed="9"/><feColorMatrix type="matrix" values="0 0 0 0 1  0 0 0 0 1  0 0 0 0 1  -0.2 0 0 0 0.1"/></filter>
<filter id="nzd" x="0" y="0" width="100%" height="100%" color-interpolation-filters="sRGB"><feTurbulence type="fractalNoise" baseFrequency="0.45" numOctaves="2" seed="4"/><feColorMatrix type="matrix" values="0 0 0 0 0  0 0 0 0 0  0 0 0 0 0  0.36 0 0 0 -0.18"/></filter>
<filter id="nzl" x="0" y="0" width="100%" height="100%" color-interpolation-filters="sRGB"><feTurbulence type="fractalNoise" baseFrequency="0.45" numOctaves="2" seed="4"/><feColorMatrix type="matrix" values="0 0 0 0 1  0 0 0 0 1  0 0 0 0 1  -0.36 0 0 0 0.18"/></filter>
<linearGradient id="tvg" x1="0" y1="0" x2="0" y2="1"><stop offset="0" stop-color="#4a525c"/><stop offset="1" stop-color="#363d46"/></linearGradient>
<pattern id="chk2" patternUnits="userSpaceOnUse" x="486.3" y="175.5" width="3.2" height="3.2"><rect width="3.2" height="3.2" fill="#c8c8c8"/><rect width="1.6" height="1.6" fill="#8a8a8a"/><rect x="1.6" y="1.6" width="1.6" height="1.6" fill="#8a8a8a"/></pattern>
<linearGradient id="pil2" x1="0" y1="0" x2="0" y2="1"><stop offset="0" stop-color="#e6e6e6"/><stop offset="0.3" stop-color="#fbfbfb"/><stop offset="0.7" stop-color="#eeeeee"/><stop offset="1" stop-color="#b4b4b4"/></linearGradient>
<linearGradient id="benchg" x1="0" y1="0" x2="1" y2="0"><stop offset="0" stop-color="#8a8a8a"/><stop offset="1" stop-color="#b0b0b0"/></linearGradient>
<linearGradient id="counter" x1="0" y1="0" x2="0" y2="1"><stop offset="0" stop-color="#b4b4b4"/><stop offset="1" stop-color="#a2a2a2"/></linearGradient>
<linearGradient id="steel" x1="0" y1="0" x2="1" y2="1"><stop offset="0" stop-color="#a8a8a8"/><stop offset="0.5" stop-color="#c8c8c8"/><stop offset="1" stop-color="#a4a4a4"/></linearGradient>
<pattern id="tile" patternUnits="userSpaceOnUse" x="595.6" y="303.6" width="8.3" height="8.3"><rect width="8.3" height="8.3" fill="#ececec"/><path d="M0 0L8.3 8.3M8.3 0L0 8.3" stroke="#6a6a6a" stroke-width="1.1"/><circle cx="4.15" cy="4.15" r="1.6" fill="#fafafa"/></pattern>
<linearGradient id="mattress" x1="0" y1="0" x2="1" y2="0"><stop offset="0" stop-color="#86a084"/><stop offset="0.5" stop-color="#96ae90"/><stop offset="1" stop-color="#8aa486"/></linearGradient>
<linearGradient id="mattress2" x1="0" y1="0" x2="1" y2="0"><stop offset="0" stop-color="#6e8c72"/><stop offset="0.5" stop-color="#80a082"/><stop offset="1" stop-color="#70907a"/></linearGradient>
<linearGradient id="pillow" x1="0" y1="0" x2="1" y2="0"><stop offset="0" stop-color="#d4d4d4"/><stop offset="0.6" stop-color="#fafafa"/><stop offset="1" stop-color="#ececec"/></linearGradient>
<linearGradient id="wood" x1="0" y1="0" x2="1" y2="1">
<stop offset="0" stop-color="#4a2619"/><stop offset="0.5" stop-color="#6a4232"/><stop offset="1" stop-color="#4a2619"/></linearGradient>
<linearGradient id="wardrobe" x1="0" y1="0" x2="1" y2="1">
<stop offset="0" stop-color="#46200f"/><stop offset="0.5" stop-color="#643a2a"/><stop offset="1" stop-color="#3e1a10"/></linearGradient>
<linearGradient id="glass" x1="0" y1="1" x2="1" y2="0">
<stop offset="0" stop-color="#5e524c"/><stop offset="0.4" stop-color="#7e746e"/><stop offset="0.55" stop-color="#b8b0a8"/><stop offset="0.7" stop-color="#807670"/><stop offset="1" stop-color="#5e5650"/></linearGradient>
<linearGradient id="table" x1="0" y1="0" x2="1" y2="1">
<stop offset="0" stop-color="#646464"/><stop offset="0.5" stop-color="#7e7e7e"/><stop offset="1" stop-color="#686868"/></linearGradient>
<radialGradient id="sink" cx="0.5" cy="0.5" r="0.5"><stop offset="0" stop-color="#e8e8e8"/><stop offset="1" stop-color="#9a9a9a"/></radialGradient>
</defs>
<rect width="800" height="479" fill="#fff"/>
<path d="M36.39 66V479M41.01 66V479M45.63 66V479M54.87 66V479M59.49 66V479M64.11 66V479M68.73 66V479M73.35 66V479M77.97 66V479M82.59 66V479M87.21 66V479M91.83 66V479M101.07 66V479M105.69 66V479M110.31 66V479M114.93 66V479M119.55 66V479M124.17 66V479M128.79 66V479M133.41 66V479M138.03 66V479M147.27 66V479M151.89 66V479M156.51 66V479M161.13 66V479M165.75 66V479M170.37 66V479M174.99 66V479M179.61 66V479M184.23 66V479M193.47 66V479M198.09 66V479M202.71 66V479M207.33 66V479M211.95 66V479M216.57 66V479M221.19 66V479M225.81 66V479M230.43 66V479M239.67 66V479M244.29 66V479M248.91 66V479M253.53 66V479M258.15 66V479M262.77 66V479M267.39 66V479M272.01 66V479M276.63 66V479M285.87 66V479M290.49 66V479M295.11 66V479M299.73 66V479M304.35 66V479M308.97 66V479M313.59 66V479M318.21 66V479M322.83 66V479M332.07 66V479M336.69 66V479M341.31 66V479M345.93 66V479M350.55 66V479M355.17 66V479M359.79 66V479M364.41 66V479M369.03 66V479M378.27 66V479M382.89 66V479M387.51 66V479M392.13 66V479M396.75 66V479M401.37 66V479M405.99 66V479M410.61 66V479M415.23 66V479M424.47 66V479M429.09 66V479M433.71 66V479M438.33 66V479M442.95 66V479M447.57 66V479M452.19 66V479M456.81 66V479M461.43 66V479M470.67 66V479M475.29 66V479M479.91 66V479M484.53 66V479M489.15 66V479M493.77 66V479M498.39 66V479M503.01 66V479M507.63 66V479M516.87 66V479M521.49 66V479M526.11 66V479M530.73 66V479M535.35 66V479M539.97 66V479M544.59 66V479M549.21 66V479M553.83 66V479M563.07 66V479M567.69 66V479M572.31 66V479M576.93 66V479M581.55 66V479M586.17 66V479M590.79 66V479M595.41 66V479M600.03 66V479M609.27 66V479M613.89 66V479M618.51 66V479M623.13 66V479M627.75 66V479M632.37 66V479M636.99 66V479M641.61 66V479M646.23 66V479M655.47 66V479M660.09 66V479M664.71 66V479M669.33 66V479M673.95 66V479M678.57 66V479M683.19 66V479M687.81 66V479M692.43 66V479M701.67 66V479M706.29 66V479M710.91 66V479M715.53 66V479M720.15 66V479M724.77 66V479M729.39 66V479M734.01 66V479M738.63 66V479M747.87 66V479M752.49 66V479M757.11 66V479M761.73 66V479M766.35 66V479M770.97 66V479M775.59 66V479M780.21 66V479M784.83 66V479M794.07 66V479M798.69 66V479M34 66.94H800M34 71.56H800M34 76.18H800M34 85.42H800M34 90.04H800M34 94.66H800M34 99.28H800M34 103.90H800M34 108.52H800M34 113.14H800M34 117.76H800M34 122.38H800M34 131.62H800M34 136.24H800M34 140.86H800M34 145.48H800M34 150.10H800M34 154.72H800M34 159.34H800M34 163.96H800M34 168.58H800M34 177.82H800M34 182.44H800M34 187.06H800M34 191.68H800M34 196.30H800M34 200.92H800M34 205.54H800M34 210.16H800M34 214.78H800M34 224.02H800M34 228.64H800M34 233.26H800M34 237.88H800M34 242.50H800M34 247.12H800M34 251.74H800M34 256.36H800M34 260.98H800M34 270.22H800M34 274.84H800M34 279.46H800M34 284.08H800M34 288.70H800M34 293.32H800M34 297.94H800M34 302.56H800M34 307.18H800M34 316.42H800M34 321.04H800M34 325.66H800M34 330.28H800M34 334.90H800M34 339.52H800M34 344.14H800M34 348.76H800M34 353.38H800M34 362.62H800M34 367.24H800M34 371.86H800M34 376.48H800M34 381.10H800M34 385.72H800M34 390.34H800M34 394.96H800M34 399.58H800M34 408.82H800M34 413.44H800M34 418.06H800M34 422.68H800M34 427.30H800M34 431.92H800M34 436.54H800M34 441.16H800M34 445.78H800M34 455.02H800M34 459.64H800M34 464.26H800M34 468.88H800M34 473.50H800M34 478.12H800" stroke="#f2f2f2" stroke-width="0.7" fill="none"/>
<path d="M50.25 66V479M96.45 66V479M142.65 66V479M188.85 66V479M235.05 66V479M281.25 66V479M327.45 66V479M373.65 66V479M419.85 66V479M466.05 66V479M512.25 66V479M558.45 66V479M604.65 66V479M650.85 66V479M697.05 66V479M743.25 66V479M789.45 66V479M34 80.80H800M34 127.00H800M34 173.20H800M34 219.40H800M34 265.60H800M34 311.80H800M34 358.00H800M34 404.20H800M34 450.40H800" stroke="#dcdcdc" stroke-width="1" fill="none"/>
<rect x="285.3" y="118" width="224.1" height="163.8" fill="#7d4541"/>
<rect x="509.4" y="95.4" width="223" height="146.8" fill="#ccc6a6"/>
<rect x="678.6" y="242.2" width="53.8" height="59.7" fill="#ccc6a6"/>
<rect x="565.2" y="301.9" width="167.2" height="113.5" fill="#c5a77b"/>
<rect x="285.3" y="118" width="224.1" height="163.8" fill="#000" filter="url(#nzd2)"/>
<rect x="285.3" y="118" width="224.1" height="163.8" fill="#fff" filter="url(#nzl2)"/>
<rect x="565.2" y="301.9" width="167.2" height="113.5" fill="#000" filter="url(#nzd)"/>
<rect x="565.2" y="301.9" width="167.2" height="113.5" fill="#fff" filter="url(#nzl)"/>
<rect x="509.4" y="95.4" width="223" height="146.8" fill="#000" filter="url(#nzd3)"/>
<rect x="509.4" y="95.4" width="223" height="146.8" fill="#fff" filter="url(#nzl3)"/>
<rect x="678.6" y="242.2" width="53.8" height="59.7" fill="#000" filter="url(#nzd3)"/>
<rect x="678.6" y="242.2" width="53.8" height="59.7" fill="#fff" filter="url(#nzl3)"/>
<rect x="509.4" y="95.4" width="223" height="146.8" fill="url(#dots)"/>
<rect x="678.6" y="242.2" width="53.8" height="59.7" fill="url(#dots2)"/>
<rect x="565.2" y="301.9" width="167.2" height="113.5" fill="url(#sand)"/>
<rect x="509.4" y="242.2" width="55.8" height="173.2" fill="url(#parq2)"/>
<rect x="285.3" y="281.8" width="224.1" height="162.5" fill="url(#parq)"/>
<rect x="565.2" y="242.2" width="113.4" height="59.7" fill="url(#check)"/>
<rect x="287.6" y="121.2" width="86.4" height="42.4" fill="#5c3326"/>
<rect x="289" y="122.6" width="60" height="39.6" fill="url(#mattress)"/>
<rect x="348.7" y="122.5" width="24" height="39.5" rx="1" fill="#f6f6f6"/>
<rect x="351.6" y="127.5" width="19.4" height="30" fill="url(#pillow)"/>
<path d="M332 148.8 L348.1 136.8 L349 162 L343 162 Z" fill="#f0f0f0"/><path d="M343 162 L348.1 136.8" stroke="#d0d0d0" stroke-width="0.5"/>
<rect x="349" y="163" width="25" height="2.6" fill="#5a3628"/>
<rect x="289" y="164.8" width="40.2" height="43.2" fill="url(#mattress2)"/>
<rect x="375.6" y="120.8" width="77.2" height="22.5" fill="url(#wood)"/>
<rect x="474.2" y="139.5" width="31" height="30" fill="#4c3e3a" stroke="#2a201e" stroke-width="0.6"/>
<rect x="477.6" y="144.5" width="24.2" height="25" fill="#382a26"/>
<rect x="477.6" y="140.1" width="24.2" height="3.8" fill="#54443e"/>
<rect x="474.2" y="190.7" width="31" height="30" fill="#4c3e3a" stroke="#2a201e" stroke-width="0.6"/>
<rect x="477.6" y="190.7" width="24.2" height="25" fill="#382a26"/>
<rect x="477.6" y="216.29999999999998" width="24.2" height="3.8" fill="#54443e"/>
<path d="M485.8 167.6 L496.2 167.6 L503.6 175 L503.6 185.4 L496.2 192.8 L485.8 192.8 L478.4 185.4 L478.4 175 Z" fill="#e0e0e0" stroke="#a4a4a4" stroke-width="0.7"/>
<rect x="486.3" y="175.5" width="9.4" height="9.4" fill="url(#chk2)"/>
<rect x="392.8" y="239.5" width="4" height="8" rx="1.5" fill="#b4b4b4" stroke="#6a6a6a" stroke-width="0.5"/><rect x="417" y="239.5" width="4" height="8" rx="1.5" fill="#b4b4b4" stroke="#6a6a6a" stroke-width="0.5"/>
<path d="M396 250 V240 Q396 235.5 402 235.5 H412 Q418 235.5 418 240 V250 Z" fill="#9c9c9c" stroke="#555" stroke-width="0.6"/>
<path d="M397.5 237.2 Q407 233.4 416.5 237.2" stroke="#444" stroke-width="1.8" fill="none"/>
<path d="M369 253.2 Q403 245.5 436.7 253.2 V278.3 H369 Z" fill="#c49a74" stroke="#a87c58" stroke-width="0.5"/>
<rect x="396.3" y="253.8" width="17.6" height="15.1" fill="#2a2a2a"/>
<rect x="398" y="256" width="14" height="10" fill="#4a4a4a"/><rect x="403.5" y="253.8" width="3" height="2" fill="#cfcfcf"/>
<circle cx="378.5" cy="258.2" r="4.6" fill="#7a8a96" stroke="#4a5a66" stroke-width="0.5"/><circle cx="378.5" cy="272" r="3" fill="#b8c0c8"/><path d="M378.5 262.5V269" stroke="#555" stroke-width="1"/>
<rect x="287" y="252.9" width="73" height="28.1" fill="url(#wood)"/>
<rect x="327.7" y="283.1" width="101.7" height="19.4" fill="url(#tvg)"/>
<rect x="327.7" y="283.1" width="2.4" height="19.4" fill="#b8b8b8"/><rect x="427" y="283.1" width="2.4" height="19.4" fill="#b8b8b8"/>
<path d="M359 295.5 Q362 292.6 372 292.2 Q375 290 380 290 Q385 290 388 292.2 Q398 292.6 401 295.5 Q380 294.4 359 295.5 Z" fill="#1e2228"/>
<rect x="330.9" y="360.9" width="83.9" height="35.4" fill="url(#glass)" opacity="0.72"/>
<path d="M328 368H404 M345 360V397 M400 360V392 M340 391H417" stroke="#d8d8d0" stroke-width="0.6" fill="none"/>
<rect x="316.7" y="406" width="110.2" height="35.9" fill="#6a6a6a"/>
<rect x="318" y="407.2" width="107.6" height="33.5" fill="#2e2e2e"/>
<rect x="323" y="408" width="32" height="25" fill="#3c3c3c"/><rect x="357" y="408" width="30.5" height="25" fill="#3c3c3c"/><rect x="389.5" y="408" width="32" height="25" fill="#3c3c3c"/>
<rect x="318" y="434" width="107.6" height="6.7" fill="#444"/>
<g><path d="M300.0 295.6 L305.7 299.0 L312.2 297.8 L306.5 294.4Z" fill="#2f6a2a"/><path d="M300.0 295.6 L304.4 300.1 L310.7 300.4 L306.3 295.9Z" fill="#3f7d34"/><path d="M300.0 295.6 L303.2 300.9 L309.2 302.7 L306.0 297.3Z" fill="#4a8a3a"/><path d="M300.0 295.6 L301.5 301.4 L306.7 304.3 L305.2 298.6Z" fill="#2f6a2a"/><path d="M300.0 295.6 L299.6 301.9 L303.6 306.8 L304.0 300.5Z" fill="#3f7d34"/><path d="M300.0 295.6 L297.3 301.2 L299.2 307.2 L301.9 301.5Z" fill="#4a8a3a"/><path d="M300.0 295.6 L295.8 300.3 L295.8 306.6 L300.1 301.9Z" fill="#2f6a2a"/><path d="M300.0 295.6 L295.1 299.8 L294.3 306.1 L299.2 301.9Z" fill="#3f7d34"/><path d="M300.0 295.6 L294.4 298.0 L292.1 303.7 L297.7 301.3Z" fill="#4a8a3a"/><path d="M300.0 295.6 L293.7 295.8 L289.2 300.2 L295.5 300.0Z" fill="#2f6a2a"/><path d="M300.0 295.6 L293.5 294.2 L287.6 297.4 L294.1 298.8Z" fill="#3f7d34"/><path d="M300.0 295.6 L294.2 292.9 L288.1 294.9 L293.9 297.5Z" fill="#4a8a3a"/><path d="M300.0 295.6 L294.8 291.5 L288.2 291.7 L293.4 295.8Z" fill="#2f6a2a"/><path d="M300.0 295.6 L297.5 290.2 L291.9 288.1 L294.4 293.5Z" fill="#3f7d34"/><path d="M300.0 295.6 L299.5 289.7 L295.0 285.8 L295.4 291.8Z" fill="#4a8a3a"/><path d="M300.0 295.6 L300.2 288.7 L296.1 283.3 L295.9 290.1Z" fill="#2f6a2a"/><path d="M300.0 295.6 L302.0 289.6 L299.3 283.8 L297.4 289.8Z" fill="#3f7d34"/><path d="M300.0 295.6 L303.3 290.3 L302.0 284.3 L298.8 289.5Z" fill="#4a8a3a"/><path d="M300.0 295.6 L305.4 291.7 L307.0 285.2 L301.6 289.1Z" fill="#2f6a2a"/><path d="M300.0 295.6 L305.9 292.9 L308.5 287.0 L302.6 289.7Z" fill="#3f7d34"/><path d="M300.0 295.6 L306.2 294.5 L310.1 289.5 L303.9 290.6Z" fill="#4a8a3a"/><path d="M300.0 295.6 L306.4 297.5 L312.6 294.8 L306.1 292.9Z" fill="#2f6a2a"/><circle cx="300" cy="295.6" r="7.1" fill="#35702d"/><ellipse cx="301.5" cy="299.9" rx="2.0" ry="1.0" transform="rotate(174 301.5 299.9)" fill="#f0a818"/><ellipse cx="300.7" cy="289.3" rx="2.0" ry="1.0" transform="rotate(154 300.7 289.3)" fill="#f0a818"/><ellipse cx="304.3" cy="301.1" rx="2.0" ry="1.0" transform="rotate(141 304.3 301.1)" fill="#f0a818"/><ellipse cx="303.0" cy="293.8" rx="2.0" ry="1.0" transform="rotate(23 303.0 293.8)" fill="#f0a818"/><ellipse cx="301.5" cy="293.1" rx="2.0" ry="1.0" transform="rotate(88 301.5 293.1)" fill="#f0a818"/><ellipse cx="298.0" cy="303.6" rx="2.0" ry="1.0" transform="rotate(38 298.0 303.6)" fill="#f0a818"/><ellipse cx="303.5" cy="300.5" rx="2.0" ry="1.0" transform="rotate(64 303.5 300.5)" fill="#f0a818"/><ellipse cx="302.4" cy="300.2" rx="2.0" ry="1.0" transform="rotate(67 302.4 300.2)" fill="#f0a818"/><ellipse cx="300.2" cy="292.6" rx="2.0" ry="1.0" transform="rotate(156 300.2 292.6)" fill="#f0a818"/><ellipse cx="301.0" cy="291.4" rx="2.0" ry="1.0" transform="rotate(42 301.0 291.4)" fill="#f0a818"/></g>
<g><path d="M301.0 428.0 L306.3 431.8 L312.7 430.7 L307.4 426.9Z" fill="#2f6a2a"/><path d="M301.0 428.0 L305.8 433.5 L313.1 434.5 L308.2 429.1Z" fill="#3f7d34"/><path d="M301.0 428.0 L304.4 434.0 L310.9 436.1 L307.5 430.1Z" fill="#4a8a3a"/><path d="M301.0 428.0 L301.8 434.5 L307.0 438.5 L306.2 432.0Z" fill="#2f6a2a"/><path d="M301.0 428.0 L300.8 435.5 L305.4 441.5 L305.6 434.0Z" fill="#3f7d34"/><path d="M301.0 428.0 L299.3 435.4 L302.5 442.2 L304.2 434.9Z" fill="#4a8a3a"/><path d="M301.0 428.0 L297.4 434.3 L298.7 441.4 L302.3 435.1Z" fill="#2f6a2a"/><path d="M301.0 428.0 L294.6 432.0 L292.0 439.1 L298.5 435.1Z" fill="#3f7d34"/><path d="M301.0 428.0 L294.2 430.9 L290.9 437.5 L297.7 434.6Z" fill="#4a8a3a"/><path d="M301.0 428.0 L294.0 428.4 L289.0 433.3 L296.0 432.9Z" fill="#2f6a2a"/><path d="M301.0 428.0 L294.0 427.2 L288.1 431.3 L295.2 432.0Z" fill="#3f7d34"/><path d="M301.0 428.0 L294.8 425.0 L288.3 426.9 L294.4 430.0Z" fill="#4a8a3a"/><path d="M301.0 428.0 L295.2 423.3 L287.8 423.3 L293.5 428.0Z" fill="#2f6a2a"/><path d="M301.0 428.0 L297.9 421.8 L291.5 419.3 L294.6 425.5Z" fill="#3f7d34"/><path d="M301.0 428.0 L299.1 421.3 L293.2 417.6 L295.1 424.3Z" fill="#4a8a3a"/><path d="M301.0 428.0 L302.2 421.0 L298.6 414.8 L297.3 421.9Z" fill="#2f6a2a"/><path d="M301.0 428.0 L303.3 420.9 L300.5 413.9 L298.3 421.1Z" fill="#3f7d34"/><path d="M301.0 428.0 L305.2 421.9 L304.6 414.6 L300.4 420.6Z" fill="#4a8a3a"/><path d="M301.0 428.0 L306.1 423.9 L306.9 417.3 L301.8 421.5Z" fill="#2f6a2a"/><path d="M301.0 428.0 L307.0 425.7 L309.6 419.8 L303.6 422.1Z" fill="#3f7d34"/><path d="M301.0 428.0 L308.3 428.1 L313.9 423.5 L306.7 423.4Z" fill="#4a8a3a"/><path d="M301.0 428.0 L308.0 429.1 L314.0 425.3 L307.0 424.2Z" fill="#2f6a2a"/><circle cx="301" cy="428" r="7.8" fill="#35702d"/><ellipse cx="297.5" cy="430.1" rx="2.1" ry="1.1" transform="rotate(129 297.5 430.1)" fill="#e8b020"/><ellipse cx="299.4" cy="432.6" rx="2.1" ry="1.1" transform="rotate(172 299.4 432.6)" fill="#d41c1c"/><ellipse cx="301.8" cy="434.1" rx="2.1" ry="1.1" transform="rotate(56 301.8 434.1)" fill="#e8b020"/><ellipse cx="295.2" cy="427.4" rx="2.1" ry="1.1" transform="rotate(149 295.2 427.4)" fill="#d41c1c"/><ellipse cx="303.2" cy="435.7" rx="2.1" ry="1.1" transform="rotate(113 303.2 435.7)" fill="#e8b020"/><ellipse cx="298.3" cy="419.9" rx="2.1" ry="1.1" transform="rotate(165 298.3 419.9)" fill="#d41c1c"/><ellipse cx="305.9" cy="431.1" rx="2.1" ry="1.1" transform="rotate(145 305.9 431.1)" fill="#e8b020"/><ellipse cx="296.0" cy="428.2" rx="2.1" ry="1.1" transform="rotate(80 296.0 428.2)" fill="#d41c1c"/><ellipse cx="303.5" cy="427.4" rx="2.1" ry="1.1" transform="rotate(106 303.5 427.4)" fill="#e8b020"/><ellipse cx="302.8" cy="431.6" rx="2.1" ry="1.1" transform="rotate(110 302.8 431.6)" fill="#d41c1c"/></g>
<g><path d="M445.7 427.5 Q453.3 432.1 458.1 434.1 Q453.6 423.5 445.7 427.5Z" fill="#4e9434" stroke="#2e6a22" stroke-width="0.4"/><path d="M445.7 427.5 Q448.2 435.7 450.7 439.9 Q454.1 429.2 445.7 427.5Z" fill="#5fa43e" stroke="#2e6a22" stroke-width="0.4"/><path d="M445.7 427.5 Q442.1 434.8 441.4 439.4 Q450.7 434.0 445.7 427.5Z" fill="#4e9434" stroke="#2e6a22" stroke-width="0.4"/><path d="M445.7 427.5 Q438.4 431.0 435.1 434.1 Q445.7 435.6 445.7 427.5Z" fill="#5fa43e" stroke="#2e6a22" stroke-width="0.4"/><path d="M445.7 427.5 Q437.1 424.8 431.8 424.0 Q438.9 433.4 445.7 427.5Z" fill="#4e9434" stroke="#2e6a22" stroke-width="0.4"/><path d="M445.7 427.5 Q440.6 420.5 436.9 417.2 Q437.1 428.5 445.7 427.5Z" fill="#5fa43e" stroke="#2e6a22" stroke-width="0.4"/><path d="M445.7 427.5 Q446.8 418.8 446.4 413.7 Q438.7 422.2 445.7 427.5Z" fill="#4e9434" stroke="#2e6a22" stroke-width="0.4"/><path d="M445.7 427.5 Q452.3 421.5 455.5 417.3 Q444.0 418.8 445.7 427.5Z" fill="#5fa43e" stroke="#2e6a22" stroke-width="0.4"/><path d="M445.7 427.5 Q454.2 426.9 459.0 425.4 Q449.3 419.7 445.7 427.5Z" fill="#4e9434" stroke="#2e6a22" stroke-width="0.4"/><circle cx="445.7" cy="427.5" r="2.9" fill="#4a8a34"/></g>
<rect x="512" y="96.8" width="21.6" height="75.7" fill="url(#wardrobe)"/>
<rect x="708.8" y="96.8" width="21.4" height="75.7" fill="url(#wardrobe)"/>
<rect x="564" y="97.9" width="20.7" height="21.2" fill="#8a6a5c"/>
<rect x="659.3" y="97.9" width="20.7" height="21.2" fill="#8a6a5c"/>
<rect x="587.3" y="97.9" width="70.7" height="74.8" fill="#f6f6f6" stroke="#bbb" stroke-width="0.5"/>
<path d="M587.8 122 V98.3 H657.5 V131" fill="none" stroke="#1e1e1e" stroke-width="1.1"/>
<rect x="591.3" y="102" width="29.3" height="17.8" rx="2.5" fill="url(#pil2)" stroke="#cfcfcf" stroke-width="0.6"/><rect x="624" y="102" width="29.4" height="17.8" rx="2.5" fill="url(#pil2)" stroke="#cfcfcf" stroke-width="0.6"/>
<path d="M587.3 121.5 H658 M588 171 L622.7 146.4 L657.5 171 M622.7 122 V146.4 M587.3 126 H658 M622.9 121 L657.4 130.6 M622.9 121 L650.5 138.1 L657.4 131.8" stroke="#a8a8a8" stroke-width="0.5" fill="none"/>
<rect x="595.9" y="207.5" width="59.7" height="32" fill="#fbfbfb" stroke="#8a98a8" stroke-width="1"/>
<path d="M599.0 209v2.2M599.0 235.8v2.2M604.2 209v2.2M604.2 235.8v2.2M609.4 209v2.2M609.4 235.8v2.2M614.6 209v2.2M614.6 235.8v2.2M619.8 209v2.2M619.8 235.8v2.2M625.0 209v2.2M625.0 235.8v2.2M630.2 209v2.2M630.2 235.8v2.2M635.4 209v2.2M635.4 235.8v2.2M640.6 209v2.2M640.6 235.8v2.2M645.8 209v2.2M645.8 235.8v2.2M651.0 209v2.2M651.0 235.8v2.2" stroke="#555" stroke-width="0.9"/>
<rect x="600.6" y="213" width="50.4" height="21.8" rx="3" fill="url(#benchg)"/>
<path d="M620 216 Q626 211 634 213 L649 213 L649 233 L634 233 Q625 230 620 216Z" fill="#f2f2f2"/>
<g><path d="M581.7 227.0 L588.4 230.3 L595.6 228.6 L588.9 225.3Z" fill="#2f6a2a"/><path d="M581.7 227.0 L586.9 232.5 L594.4 233.6 L589.2 228.1Z" fill="#3f7d34"/><path d="M581.7 227.0 L585.6 232.7 L592.3 234.3 L588.4 228.6Z" fill="#4a8a3a"/><path d="M581.7 227.0 L582.3 233.7 L587.4 238.2 L586.8 231.5Z" fill="#2f6a2a"/><path d="M581.7 227.0 L581.9 233.9 L586.8 238.9 L586.5 232.0Z" fill="#3f7d34"/><path d="M581.7 227.0 L579.3 234.2 L581.9 241.3 L584.3 234.1Z" fill="#4a8a3a"/><path d="M581.7 227.0 L577.4 232.8 L578.0 240.0 L582.3 234.2Z" fill="#2f6a2a"/><path d="M581.7 227.0 L575.6 230.9 L573.5 237.8 L579.6 233.9Z" fill="#3f7d34"/><path d="M581.7 227.0 L575.3 230.6 L572.6 237.4 L579.1 233.9Z" fill="#4a8a3a"/><path d="M581.7 227.0 L575.1 227.9 L571.1 233.1 L577.6 232.2Z" fill="#2f6a2a"/><path d="M581.7 227.0 L575.2 226.2 L570.2 230.3 L576.6 231.0Z" fill="#3f7d34"/><path d="M581.7 227.0 L575.2 223.6 L568.0 225.2 L574.5 228.6Z" fill="#4a8a3a"/><path d="M581.7 227.0 L576.9 221.7 L569.9 220.8 L574.6 226.1Z" fill="#2f6a2a"/><path d="M581.7 227.0 L577.6 220.6 L570.5 218.2 L574.6 224.6Z" fill="#3f7d34"/><path d="M581.7 227.0 L580.8 220.5 L575.6 216.4 L576.5 223.0Z" fill="#4a8a3a"/><path d="M581.7 227.0 L582.8 220.5 L579.1 215.2 L578.0 221.6Z" fill="#2f6a2a"/><path d="M581.7 227.0 L583.9 220.8 L581.1 214.8 L578.9 221.0Z" fill="#3f7d34"/><path d="M581.7 227.0 L585.9 221.1 L585.2 214.0 L581.0 219.8Z" fill="#4a8a3a"/><path d="M581.7 227.0 L587.3 223.7 L588.8 217.4 L583.3 220.7Z" fill="#2f6a2a"/><path d="M581.7 227.0 L587.9 223.8 L590.4 217.3 L584.2 220.5Z" fill="#3f7d34"/><path d="M581.7 227.0 L589.1 225.6 L594.0 219.9 L586.6 221.3Z" fill="#4a8a3a"/><path d="M581.7 227.0 L588.5 228.3 L594.4 224.7 L587.6 223.4Z" fill="#2f6a2a"/><circle cx="581.7" cy="227" r="7.8" fill="#35702d"/><ellipse cx="577.3" cy="224.2" rx="2.1" ry="1.1" transform="rotate(29 577.3 224.2)" fill="#e8b020"/><ellipse cx="585.2" cy="226.7" rx="2.1" ry="1.1" transform="rotate(144 585.2 226.7)" fill="#d41c1c"/><ellipse cx="576.7" cy="231.7" rx="2.1" ry="1.1" transform="rotate(172 576.7 231.7)" fill="#e8b020"/><ellipse cx="581.2" cy="221.7" rx="2.1" ry="1.1" transform="rotate(12 581.2 221.7)" fill="#d41c1c"/><ellipse cx="577.1" cy="222.8" rx="2.1" ry="1.1" transform="rotate(5 577.1 222.8)" fill="#e8b020"/><ellipse cx="577.8" cy="225.8" rx="2.1" ry="1.1" transform="rotate(143 577.8 225.8)" fill="#d41c1c"/><ellipse cx="582.2" cy="224.3" rx="2.1" ry="1.1" transform="rotate(179 582.2 224.3)" fill="#e8b020"/><ellipse cx="583.4" cy="231.3" rx="2.1" ry="1.1" transform="rotate(149 583.4 231.3)" fill="#d41c1c"/><ellipse cx="583.7" cy="224.0" rx="2.1" ry="1.1" transform="rotate(126 583.7 224.0)" fill="#e8b020"/><ellipse cx="583.0" cy="235.1" rx="2.1" ry="1.1" transform="rotate(46 583.0 235.1)" fill="#d41c1c"/></g>
<g><path d="M672.0 227.0 L677.9 230.3 L684.5 228.6 L678.5 225.3Z" fill="#2f6a2a"/><path d="M672.0 227.0 L676.6 231.6 L683.2 231.6 L678.5 227.0Z" fill="#3f7d34"/><path d="M672.0 227.0 L675.4 232.5 L681.7 234.0 L678.3 228.5Z" fill="#4a8a3a"/><path d="M672.0 227.0 L673.8 233.6 L679.6 237.2 L677.8 230.6Z" fill="#2f6a2a"/><path d="M672.0 227.0 L671.2 233.6 L675.2 238.9 L676.0 232.3Z" fill="#3f7d34"/><path d="M672.0 227.0 L668.9 233.9 L670.8 241.3 L673.9 234.3Z" fill="#4a8a3a"/><path d="M672.0 227.0 L667.6 231.9 L667.8 238.6 L672.3 233.6Z" fill="#2f6a2a"/><path d="M672.0 227.0 L666.8 231.2 L666.0 237.9 L671.2 233.6Z" fill="#3f7d34"/><path d="M672.0 227.0 L665.4 230.4 L662.4 237.2 L669.0 233.8Z" fill="#4a8a3a"/><path d="M672.0 227.0 L664.4 227.0 L658.5 231.7 L666.1 231.7Z" fill="#2f6a2a"/><path d="M672.0 227.0 L665.6 225.4 L659.9 228.7 L666.3 230.3Z" fill="#3f7d34"/><path d="M672.0 227.0 L666.0 224.0 L659.5 225.9 L665.5 229.0Z" fill="#4a8a3a"/><path d="M672.0 227.0 L666.9 222.9 L660.5 223.6 L665.5 227.7Z" fill="#2f6a2a"/><path d="M672.0 227.0 L668.5 220.3 L661.7 217.3 L665.1 224.0Z" fill="#3f7d34"/><path d="M672.0 227.0 L671.1 220.1 L665.8 215.6 L666.7 222.5Z" fill="#4a8a3a"/><path d="M672.0 227.0 L672.4 220.3 L668.0 215.2 L667.6 221.9Z" fill="#2f6a2a"/><path d="M672.0 227.0 L674.6 220.8 L672.2 214.5 L669.6 220.7Z" fill="#3f7d34"/><path d="M672.0 227.0 L676.8 221.7 L676.9 214.5 L672.1 219.9Z" fill="#4a8a3a"/><path d="M672.0 227.0 L677.0 222.4 L677.4 215.7 L672.5 220.3Z" fill="#2f6a2a"/><path d="M672.0 227.0 L678.4 225.5 L681.9 220.0 L675.5 221.4Z" fill="#3f7d34"/><path d="M672.0 227.0 L678.4 226.0 L682.2 220.8 L675.8 221.8Z" fill="#4a8a3a"/><path d="M672.0 227.0 L678.7 228.2 L684.5 224.4 L677.7 223.3Z" fill="#2f6a2a"/><circle cx="672" cy="227" r="7.8" fill="#35702d"/><ellipse cx="670.0" cy="231.6" rx="2.1" ry="1.1" transform="rotate(49 670.0 231.6)" fill="#e8b020"/><ellipse cx="673.5" cy="219.9" rx="2.1" ry="1.1" transform="rotate(65 673.5 219.9)" fill="#d41c1c"/><ellipse cx="668.8" cy="220.5" rx="2.1" ry="1.1" transform="rotate(39 668.8 220.5)" fill="#e8b020"/><ellipse cx="668.2" cy="227.1" rx="2.1" ry="1.1" transform="rotate(31 668.2 227.1)" fill="#d41c1c"/><ellipse cx="668.9" cy="232.7" rx="2.1" ry="1.1" transform="rotate(100 668.9 232.7)" fill="#e8b020"/><ellipse cx="673.6" cy="220.1" rx="2.1" ry="1.1" transform="rotate(14 673.6 220.1)" fill="#d41c1c"/><ellipse cx="675.8" cy="225.9" rx="2.1" ry="1.1" transform="rotate(159 675.8 225.9)" fill="#e8b020"/><ellipse cx="675.2" cy="227.5" rx="2.1" ry="1.1" transform="rotate(124 675.2 227.5)" fill="#d41c1c"/><ellipse cx="672.2" cy="224.5" rx="2.1" ry="1.1" transform="rotate(80 672.2 224.5)" fill="#e8b020"/><ellipse cx="675.3" cy="222.9" rx="2.1" ry="1.1" transform="rotate(52 675.3 222.9)" fill="#d41c1c"/></g>
<rect x="571.5" y="244.3" width="10.7" height="5" rx="1" fill="#b4b4b4"/>
<ellipse cx="576.8" cy="256" rx="5.2" ry="6.2" fill="#9a9a9a"/><ellipse cx="576.8" cy="256.3" rx="4" ry="5" fill="#5e5e5e"/>
<rect x="598.3" y="242.5" width="35.4" height="16.2" fill="#8c8c8c"/>
<ellipse cx="607.4" cy="250.3" rx="6.4" ry="5.6" fill="#e8eef0"/><ellipse cx="607.4" cy="250.8" rx="4.5" ry="3.8" fill="#b8c4c8"/>
<ellipse cx="624.3" cy="250.3" rx="6.4" ry="5.6" fill="#e8eef0"/><ellipse cx="624.3" cy="250.8" rx="4.5" ry="3.8" fill="#b8c4c8"/>
<rect x="653.4" y="243.6" width="23.7" height="56" fill="#d2e8f0" stroke="#a8c0cc" stroke-width="0.5"/>
<rect x="656.3" y="246.5" width="19.4" height="51.7" rx="9" fill="#a2bfcc"/>
<rect x="657.6" y="248.6" width="16.8" height="48" rx="8" fill="#c2dce6"/>
<circle cx="664.9" cy="292.5" r="1" fill="#222"/>
<rect x="680" y="273.4" width="51" height="26.6" fill="url(#wardrobe)"/>
<rect x="566.5" y="303.2" width="165" height="20" fill="url(#counter)"/>
<rect x="568.8" y="303.6" width="25.6" height="23.3" fill="url(#steel)" stroke="#8a8a8a" stroke-width="0.5"/>
<rect x="595.6" y="303.6" width="25" height="19.5" fill="url(#tile)"/>
<rect x="621.3" y="303.6" width="40" height="19.5" fill="#e2e2e2"/>
<rect x="622.5" y="305" width="18.7" height="16.2" rx="2.5" fill="#c4c4c4" stroke="#a8a8a8" stroke-width="0.6"/>
<circle cx="635.2" cy="310.8" r="1" fill="#222"/><rect x="642.2" y="305" width="1.6" height="1.6" fill="#333"/>
<path d="M645 310h15M645 312.5h15M645 315h15M645 317.5h15M645 320h15" stroke="#c8c8c8" stroke-width="0.5"/>
<rect x="686.7" y="344.5" width="16.9" height="15" fill="#e8e2c8" stroke="#8a8270" stroke-width="0.5"/>
<rect x="686.7" y="344.5" width="16.9" height="3.2" fill="#c8c0a4"/>
<rect x="686.7" y="395" width="16.9" height="12" fill="#e8e2c8" stroke="#8a8270" stroke-width="0.5"/>
<rect x="686.7" y="403.8" width="16.9" height="3.2" fill="#c8c0a4"/>
<rect x="661.5" y="369.5" width="14.8" height="16" fill="#e8e2c8" stroke="#8a8270" stroke-width="0.5"/>
<rect x="661.5" y="369.5" width="3.2" height="16" fill="#c8c0a4"/>
<rect x="713.7" y="369.5" width="14.8" height="16" fill="#e8e2c8" stroke="#8a8270" stroke-width="0.5"/>
<rect x="725.3" y="369.5" width="3.2" height="16" fill="#c8c0a4"/>
<rect x="676" y="359" width="38" height="36.5" fill="url(#table)"/>
<rect x="608.6" y="385.6" width="27" height="27.8" fill="#d8dce0" stroke="#9aa0a6" stroke-width="0.6"/>
<rect x="608.6" y="385.6" width="27" height="3.6" fill="#a9b0b8"/>
<rect x="608.6" y="411.6" width="27" height="1.8" fill="#8c9298"/>
<g font-size="3.4" fill="#444" font-family="Liberation Sans, sans-serif"><text x="615.5" y="102">4.21 m</text><text x="734.5" y="165">3.52m</text><text x="700" y="252">5.85</text><text x="693" y="267.5">3.47 m</text><text x="637" y="413">3.27 m</text><text x="288" y="218.5">3.75 m</text><text x="735" y="351">1.90 m</text></g>
<path d="M285.3 118.0L509.4 118.0M285.3 118.0L285.3 444.3M285.3 444.3L509.4 444.3M509.4 95.4L732.4 95.4M732.4 95.4L732.4 415.4M565.2 415.4L732.4 415.4M509.4 415.4L565.2 415.4M509.4 415.4L509.4 444.3M509.4 95.4L509.4 415.4M285.3 281.8L509.4 281.8M509.4 242.2L732.4 242.2M565.2 242.2L565.2 415.4M565.2 301.9L732.4 301.9M678.6 242.2L678.6 301.9" stroke="#4a4e54" stroke-width="2.5" stroke-linecap="square" fill="none"/>
<path d="M509.4 248.6L509.4 280.4M509.4 286L509.4 320M521.2 242.2L555 242.2M565.2 274.6L565.2 300.6M565.2 376L565.2 410.5M695.4 242.2L718.2 242.2M519.2 415.4L553.6 415.4" stroke="#ffffff" stroke-width="2.3" fill="none"/>
<circle cx="285.3" cy="118.0" r="1.3" fill="#8a9098"/><circle cx="509.4" cy="118.0" r="1.3" fill="#8a9098"/><circle cx="509.4" cy="95.4" r="1.3" fill="#8a9098"/><circle cx="732.4" cy="95.4" r="1.3" fill="#8a9098"/><circle cx="509.4" cy="281.8" r="1.3" fill="#8a9098"/><circle cx="285.3" cy="281.8" r="1.3" fill="#8a9098"/><circle cx="509.4" cy="242.2" r="1.3" fill="#8a9098"/><circle cx="565.2" cy="242.2" r="1.3" fill="#8a9098"/><circle cx="678.6" cy="242.2" r="1.3" fill="#8a9098"/><circle cx="732.4" cy="242.2" r="1.3" fill="#8a9098"/><circle cx="565.2" cy="301.9" r="1.3" fill="#8a9098"/><circle cx="678.6" cy="301.9" r="1.3" fill="#8a9098"/><circle cx="732.4" cy="301.9" r="1.3" fill="#8a9098"/><circle cx="565.2" cy="415.4" r="1.3" fill="#8a9098"/><circle cx="732.4" cy="415.4" r="1.3" fill="#8a9098"/><circle cx="509.4" cy="415.4" r="1.3" fill="#8a9098"/><circle cx="285.3" cy="444.3" r="1.3" fill="#8a9098"/><circle cx="509.4" cy="444.3" r="1.3" fill="#8a9098"/>
<path d="M285.3 165L285.3 213M599.2 95.4L646.2 95.4M732.4 131L732.4 179.2M285.3 371L285.3 422.8M732.4 339L732.4 386" stroke="#3a9ee6" stroke-width="2.4" fill="none"/>
<path d="M477.8 279.2H508" stroke="#f39a4a" stroke-width="2"/><path d="M477.8 279.2 A30.2 30.2 0 0 1 508 249" stroke="#e8904a" stroke-width="0.7" fill="none"/>
<path d="M473.5 286H508" stroke="#2a90e0" stroke-width="2.2"/><path d="M473.5 286 A34.5 34.5 0 0 0 508 320.5" stroke="#3a6a90" stroke-width="0.8" fill="none"/>
<path d="M521 207V241" stroke="#f39a4a" stroke-width="2"/><path d="M521 207 A34 34 0 0 1 555 241" stroke="#e8a060" stroke-width="0.6" fill="none"/>
<path d="M565.3 274.4H591.8" stroke="#f39a4a" stroke-width="2"/><path d="M591.8 274.4 A26.5 26.5 0 0 1 565.3 300.9" stroke="#e8a060" stroke-width="0.6" fill="none"/>
<path d="M567 411H601.7" stroke="#f39a4a" stroke-width="2"/><path d="M567 376.3 A34.7 34.7 0 0 1 601.7 411" stroke="#e8a060" stroke-width="0.6" fill="none"/>
<path d="M519.2 416V450.8" stroke="#2a8fe8" stroke-width="2"/><path d="M519.2 450.8 A34.8 34.8 0 0 0 554 416" stroke="#6ab0f0" stroke-width="0.7" fill="none"/>
<rect x="24" y="56" width="776" height="9.7" fill="#4b4b4b"/>
<rect x="24" y="56" width="9.8" height="423" fill="#4b4b4b"/>
<path d="M36.39 63.8V65.7M41.01 63.8V65.7M45.63 63.8V65.7M50.25 62.2V65.7M54.87 63.8V65.7M59.49 63.8V65.7M64.11 63.8V65.7M68.73 63.8V65.7M73.35 62.8V65.7M77.97 63.8V65.7M82.59 63.8V65.7M87.21 63.8V65.7M91.83 63.8V65.7M96.45 62.2V65.7M101.07 63.8V65.7M105.69 63.8V65.7M110.31 63.8V65.7M114.93 63.8V65.7M119.55 62.8V65.7M124.17 63.8V65.7M128.79 63.8V65.7M133.41 63.8V65.7M138.03 63.8V65.7M142.65 62.2V65.7M147.27 63.8V65.7M151.89 63.8V65.7M156.51 63.8V65.7M161.13 63.8V65.7M165.75 62.8V65.7M170.37 63.8V65.7M174.99 63.8V65.7M179.61 63.8V65.7M184.23 63.8V65.7M188.85 62.2V65.7M193.47 63.8V65.7M198.09 63.8V65.7M202.71 63.8V65.7M207.33 63.8V65.7M211.95 62.8V65.7M216.57 63.8V65.7M221.19 63.8V65.7M225.81 63.8V65.7M230.43 63.8V65.7M235.05 62.2V65.7M239.67 63.8V65.7M244.29 63.8V65.7M248.91 63.8V65.7M253.53 63.8V65.7M258.15 62.8V65.7M262.77 63.8V65.7M267.39 63.8V65.7M272.01 63.8V65.7M276.63 63.8V65.7M281.25 62.2V65.7M285.87 63.8V65.7M290.49 63.8V65.7M295.11 63.8V65.7M299.73 63.8V65.7M304.35 62.8V65.7M308.97 63.8V65.7M313.59 63.8V65.7M318.21 63.8V65.7M322.83 63.8V65.7M327.45 62.2V65.7M332.07 63.8V65.7M336.69 63.8V65.7M341.31 63.8V65.7M345.93 63.8V65.7M350.55 62.8V65.7M355.17 63.8V65.7M359.79 63.8V65.7M364.41 63.8V65.7M369.03 63.8V65.7M373.65 62.2V65.7M378.27 63.8V65.7M382.89 63.8V65.7M387.51 63.8V65.7M392.13 63.8V65.7M396.75 62.8V65.7M401.37 63.8V65.7M405.99 63.8V65.7M410.61 63.8V65.7M415.23 63.8V65.7M419.85 62.2V65.7M424.47 63.8V65.7M429.09 63.8V65.7M433.71 63.8V65.7M438.33 63.8V65.7M442.95 62.8V65.7M447.57 63.8V65.7M452.19 63.8V65.7M456.81 63.8V65.7M461.43 63.8V65.7M466.05 62.2V65.7M470.67 63.8V65.7M475.29 63.8V65.7M479.91 63.8V65.7M484.53 63.8V65.7M489.15 62.8V65.7M493.77 63.8V65.7M498.39 63.8V65.7M503.01 63.8V65.7M507.63 63.8V65.7M512.25 62.2V65.7M516.87 63.8V65.7M521.49 63.8V65.7M526.11 63.8V65.7M530.73 63.8V65.7M535.35 62.8V65.7M539.97 63.8V65.7M544.59 63.8V65.7M549.21 63.8V65.7M553.83 63.8V65.7M558.45 62.2V65.7M563.07 63.8V65.7M567.69 63.8V65.7M572.31 63.8V65.7M576.93 63.8V65.7M581.55 62.8V65.7M586.17 63.8V65.7M590.79 63.8V65.7M595.41 63.8V65.7M600.03 63.8V65.7M604.65 62.2V65.7M609.27 63.8V65.7M613.89 63.8V65.7M618.51 63.8V65.7M623.13 63.8V65.7M627.75 62.8V65.7M632.37 63.8V65.7M636.99 63.8V65.7M641.61 63.8V65.7M646.23 63.8V65.7M650.85 62.2V65.7M655.47 63.8V65.7M660.09 63.8V65.7M664.71 63.8V65.7M669.33 63.8V65.7M673.95 62.8V65.7M678.57 63.8V65.7M683.19 63.8V65.7M687.81 63.8V65.7M692.43 63.8V65.7M697.05 62.2V65.7M701.67 63.8V65.7M706.29 63.8V65.7M710.91 63.8V65.7M715.53 63.8V65.7M720.15 62.8V65.7M724.77 63.8V65.7M729.39 63.8V65.7M734.01 63.8V65.7M738.63 63.8V65.7M743.25 62.2V65.7M747.87 63.8V65.7M752.49 63.8V65.7M757.11 63.8V65.7M761.73 63.8V65.7M766.35 62.8V65.7M770.97 63.8V65.7M775.59 63.8V65.7M780.21 63.8V65.7M784.83 63.8V65.7M789.45 62.2V65.7M794.07 63.8V65.7M798.69 63.8V65.7M803.31 63.8V65.7M807.93 63.8V65.7M812.55 62.8V65.7M817.17 63.8V65.7M821.79 63.8V65.7M826.41 63.8V65.7M831.03 63.8V65.7M32 66.94H33.8M32 71.56H33.8M32 76.18H33.8M30.3 80.80H33.8M32 85.42H33.8M32 90.04H33.8M32 94.66H33.8M32 99.28H33.8M31 103.90H33.8M32 108.52H33.8M32 113.14H33.8M32 117.76H33.8M32 122.38H33.8M30.3 127.00H33.8M32 131.62H33.8M32 136.24H33.8M32 140.86H33.8M32 145.48H33.8M31 150.10H33.8M32 154.72H33.8M32 159.34H33.8M32 163.96H33.8M32 168.58H33.8M30.3 173.20H33.8M32 177.82H33.8M32 182.44H33.8M32 187.06H33.8M32 191.68H33.8M31 196.30H33.8M32 200.92H33.8M32 205.54H33.8M32 210.16H33.8M32 214.78H33.8M30.3 219.40H33.8M32 224.02H33.8M32 228.64H33.8M32 233.26H33.8M32 237.88H33.8M31 242.50H33.8M32 247.12H33.8M32 251.74H33.8M32 256.36H33.8M32 260.98H33.8M30.3 265.60H33.8M32 270.22H33.8M32 274.84H33.8M32 279.46H33.8M32 284.08H33.8M31 288.70H33.8M32 293.32H33.8M32 297.94H33.8M32 302.56H33.8M32 307.18H33.8M30.3 311.80H33.8M32 316.42H33.8M32 321.04H33.8M32 325.66H33.8M32 330.28H33.8M31 334.90H33.8M32 339.52H33.8M32 344.14H33.8M32 348.76H33.8M32 353.38H33.8M30.3 358.00H33.8M32 362.62H33.8M32 367.24H33.8M32 371.86H33.8M32 376.48H33.8M31 381.10H33.8M32 385.72H33.8M32 390.34H33.8M32 394.96H33.8M32 399.58H33.8M30.3 404.20H33.8M32 408.82H33.8M32 413.44H33.8M32 418.06H33.8M32 422.68H33.8M31 427.30H33.8M32 431.92H33.8M32 436.54H33.8M32 441.16H33.8M32 445.78H33.8M30.3 450.40H33.8M32 455.02H33.8M32 459.64H33.8M32 464.26H33.8M32 468.88H33.8M31 473.50H33.8M32 478.12H33.8M32 482.74H33.8M32 487.36H33.8M32 491.98H33.8" stroke="#9a9a9a" stroke-width="0.6" fill="none"/>
<g font-size="4.5" fill="#b0b0b0"><text x="50.25" y="61.3" text-anchor="middle">40</text><text x="96.45" y="61.3" text-anchor="middle">41</text><text x="142.65" y="61.3" text-anchor="middle">42</text><text x="188.85" y="61.3" text-anchor="middle">43</text><text x="235.05" y="61.3" text-anchor="middle">44</text><text x="281.25" y="61.3" text-anchor="middle">45</text><text x="327.45" y="61.3" text-anchor="middle">46</text><text x="373.65" y="61.3" text-anchor="middle">47</text><text x="419.85" y="61.3" text-anchor="middle">48</text><text x="466.05" y="61.3" text-anchor="middle">49</text><text x="512.25" y="61.3" text-anchor="middle">50</text><text x="558.45" y="61.3" text-anchor="middle">51</text><text x="604.65" y="61.3" text-anchor="middle">52</text><text x="650.85" y="61.3" text-anchor="middle">53</text><text x="697.05" y="61.3" text-anchor="middle">54</text><text x="743.25" y="61.3" text-anchor="middle">55</text><text x="789.45" y="61.3" text-anchor="middle">56</text><text x="30.2" y="82.40" text-anchor="end">46</text><text x="30.2" y="128.60" text-anchor="end">47</text><text x="30.2" y="174.80" text-anchor="end">48</text><text x="30.2" y="221.00" text-anchor="end">49</text><text x="30.2" y="267.20" text-anchor="end">50</text><text x="30.2" y="313.40" text-anchor="end">51</text><text x="30.2" y="359.60" text-anchor="end">52</text><text x="30.2" y="405.80" text-anchor="end">53</text><text x="30.2" y="452.00" text-anchor="end">54</text></g>
<rect x="780.3" y="56" width="1.2" height="9.7" fill="#8a8a8a"/>
<rect x="24" y="117.9" width="9.8" height="1.2" fill="#9a9a9a"/>
<rect x="24" y="56" width="9.8" height="9.7" fill="#4b4b4b"/>
<rect x="0" y="0" width="800" height="42.5" fill="#fff"/>
<rect x="0" y="42.5" width="24" height="437" fill="#fff"/>
<rect x="0" y="42.2" width="800" height="0.8" fill="#e6e6e6"/>
<rect x="152" y="0" width="0.8" height="42.5" fill="#e6e6e6"/>
<rect x="152" y="19.1" width="648" height="0.8" fill="#ececec"/>
<circle cx="26.8" cy="17.7" r="15.2" fill="#536579"/>
<rect x="27.9" y="12.8" width="16" height="18.9" fill="#fff"/>
<rect x="27.3" y="12.8" width="0.9" height="18.9" fill="#a9b5c2"/>
<rect x="27.9" y="22.7" width="13.3" height="0.9" fill="#6f8092"/>
<rect x="37.2" y="14.3" width="3.8" height="0.9" fill="#ee7777"/>
<rect x="35" y="24.5" width="4.2" height="0.9" fill="#ee7777"/>
<path d="M21.2 4.9 H26 L27.9 9.8 H19.3 Z" fill="#fff"/>
<rect x="23.2" y="9.8" width="1.7" height="9" fill="#fff"/>
<path d="M22.2 19.5 Q21.3 20.6 22.2 21.7 V31.6 H26.2 V21.7 Q27 20.6 26.2 19.5 Z" fill="#fff"/>
<text x="50.4" y="23.6" font-size="14.6" fill="#e34f50" stroke="#e34f50" stroke-width="0.65" textLength="59.8" lengthAdjust="spacingAndGlyphs" transform="translate(0,23.6) scale(1,1.06) translate(0,-23.6)">Planning</text>
<text x="110.9" y="23.6" font-size="14.6" fill="#4b5e77" stroke="#4b5e77" stroke-width="0.65" textLength="28.6" lengthAdjust="spacingAndGlyphs" transform="translate(0,23.6) scale(1,1.06) translate(0,-23.6)">Wiz</text>
<text x="160.6" y="9.8" font-size="7.4" fill="#5a5a5a" textLength="17.9" lengthAdjust="spacingAndGlyphs">Plans</text>
<text x="195.25" y="9.8" font-size="7.4" fill="#5a5a5a" textLength="12.5" lengthAdjust="spacingAndGlyphs">Edit</text>
<text x="224.75" y="9.8" font-size="7.4" fill="#5a5a5a" textLength="36.5" lengthAdjust="spacingAndGlyphs">Languages</text>
<text x="276.4" y="9.8" font-size="7.4" fill="#5a5a5a" textLength="15.6" lengthAdjust="spacingAndGlyphs">Help</text>
<text x="308.2" y="9.8" font-size="7.4" fill="#5a5a5a" textLength="62.3" lengthAdjust="spacingAndGlyphs">Premium Features</text>
<text x="156" y="38.4" font-size="4.6" fill="#6a6a6a" textLength="20.9" lengthAdjust="spacingAndGlyphs">Draw Wall</text>
<text x="184.4" y="38.4" font-size="4.6" fill="#6a6a6a" textLength="24.1" lengthAdjust="spacingAndGlyphs">Draw Room</text>
<text x="216" y="38.4" font-size="4.6" fill="#6a6a6a" textLength="22.5" lengthAdjust="spacingAndGlyphs">Draw Floor</text>
<text x="245.6" y="38.4" font-size="4.6" fill="#6a6a6a" textLength="11.3" lengthAdjust="spacingAndGlyphs">Write</text>
<text x="264" y="38.4" font-size="4.6" fill="#6a6a6a" textLength="22.2" lengthAdjust="spacingAndGlyphs">Dimension</text>
<text x="293.75" y="38.4" font-size="4.6" fill="#6a6a6a" textLength="12.25" lengthAdjust="spacingAndGlyphs">Select</text>
<text x="313" y="38.4" font-size="4.6" fill="#6a6a6a" textLength="13" lengthAdjust="spacingAndGlyphs">Group</text>
<text x="333.5" y="38.4" font-size="4.6" fill="#6a6a6a" textLength="40.5" lengthAdjust="spacingAndGlyphs">Upload Background</text>
<text x="392.5" y="38.4" font-size="4.6" fill="#6a6a6a" textLength="9" lengthAdjust="spacingAndGlyphs">View</text>
<text x="419" y="38.4" font-size="4.6" fill="#6a6a6a" textLength="11.8" lengthAdjust="spacingAndGlyphs">Email</text>
<text x="437.6" y="38.4" font-size="4.6" fill="#6a6a6a" textLength="13.4" lengthAdjust="spacingAndGlyphs">Export</text>
<text x="458.4" y="38.4" font-size="4.6" fill="#6a6a6a" textLength="10.1" lengthAdjust="spacingAndGlyphs">Print</text>
<text x="475.2" y="38.4" font-size="4.6" fill="#6a6a6a" textLength="12.4" lengthAdjust="spacingAndGlyphs">Share</text>
<text x="504.9" y="38.4" font-size="4.6" fill="#6a6a6a" textLength="22.7" lengthAdjust="spacingAndGlyphs">Full Screen</text>
<text x="534.4" y="38.4" font-size="4.6" fill="#c4c4c4" textLength="11.8" lengthAdjust="spacingAndGlyphs">Undo</text>
<text x="552.9" y="38.4" font-size="4.6" fill="#c4c4c4" textLength="10.7" lengthAdjust="spacingAndGlyphs">Redo</text>
<rect x="163" y="23.8" width="7.6" height="6.4" fill="#888"/>
<path d="M163 25.9H170.6M163 28H170.6M165.5 23.8V30.2M168 23.8V30.2" stroke="#ddd" stroke-width="0.6"/>
<path d="M196 23.5 L199.5 25.3 V29.2 L196 31 L192.5 29.2 V25.3 Z" fill="#4a4a4a"/>
<path d="M192.8 25.4 L196 27.1 L199.3 25.4 M196 27.1 V30.8" stroke="#fff" stroke-width="0.6" fill="none"/>
<rect x="223.6" y="23.6" width="7.6" height="6.8" fill="#4a4a4a"/>
<rect x="224.6" y="24.6" width="5.6" height="4.8" fill="#666"/>
<text x="251.3" y="30.2" font-size="9" text-anchor="middle" fill="#4a4a4a" style="font-family:'Liberation Serif',serif">A</text>
<path d="M271.5 27H279" stroke="#4a4a4a" stroke-width="1"/><rect x="271" y="25.6" width="1" height="2.8" fill="#4a4a4a"/><rect x="278.5" y="25.6" width="1" height="2.8" fill="#4a4a4a"/>
<path d="M297.6 23.6 L302 28 L300 28.2 L301.2 30.6 L300.2 31 L299 28.6 L297.6 30 Z" fill="#4a4a4a"/>
<rect x="316.3" y="24" width="6.4" height="6" fill="none" stroke="#4a4a4a" stroke-width="0.8"/>
<path d="M318.2 25.8h2.6v2.4h-2.6z" fill="none" stroke="#4a4a4a" stroke-width="0.6"/>
<rect x="350" y="23.8" width="7.6" height="6.2" fill="#4a4a4a"/>
<path d="M350.8 29.2 L352.8 27 L354.3 28.2 L356 26.4 L356.9 27.6 V29.2 Z" fill="#bbb"/>
<text x="396.9" y="29.5" font-size="6.4" text-anchor="middle" fill="#4a4a4a">3D</text>
<rect x="421.2" y="24.4" width="7" height="5.2" fill="#4a4a4a"/>
<path d="M421.4 24.6 L424.7 27.2 L428 24.6" stroke="#fff" stroke-width="0.6" fill="none"/>
<path d="M441.3 25.3V30H447.3V27.6" stroke="#4a4a4a" stroke-width="0.9" fill="none"/><path d="M443 28.3 Q443.6 25.6 446.4 25.4" stroke="#4a4a4a" stroke-width="0.9" fill="none"/><path d="M445.6 23.8 L447.8 25.4 L445.6 27 Z" fill="#4a4a4a"/>
<rect x="460.2" y="25.8" width="6.6" height="3.4" rx="0.8" fill="#4a4a4a"/><rect x="461.5" y="23.6" width="4" height="2.6" fill="none" stroke="#4a4a4a" stroke-width="0.7"/><rect x="461.5" y="28" width="4" height="2.6" fill="#fff" stroke="#4a4a4a" stroke-width="0.7"/>
<circle cx="479.4" cy="27.1" r="1.1" fill="#4a4a4a"/><circle cx="483" cy="24.9" r="1.1" fill="#4a4a4a"/><circle cx="483" cy="29.4" r="1.1" fill="#4a4a4a"/><path d="M479.4 27.1 L483 24.9 M479.4 27.1 L483 29.4" stroke="#4a4a4a" stroke-width="0.6"/>
<path d="M513.3 24 L519.5 30.2 M519.5 24 L513.3 30.2" stroke="#4a4a4a" stroke-width="0.9"/><path d="M513 23.7h2.2v0.9h-1.3v1.3h-0.9z M519.8 23.7h-2.2v0.9h1.3v1.3h0.9z M513 30.5h2.2v-0.9h-1.3v-1.3h-0.9z M519.8 30.5h-2.2v-0.9h1.3v-1.3h0.9z" fill="#4a4a4a"/>
<path d="M538.6 25.2 A2.9 2.9 0 1 1 538 28.6" stroke="#b0b0b0" stroke-width="0.8" fill="none"/><path d="M537.3 23.9 L539.5 25.2 L537.7 26.4 Z" fill="#b0b0b0"/>
<path d="M560 25.2 A2.9 2.9 0 1 0 560.6 28.6" stroke="#b0b0b0" stroke-width="0.8" fill="none"/><path d="M561.3 23.9 L559.1 25.2 L560.9 26.4 Z" fill="#b0b0b0"/>
<rect x="23.5" y="43.3" width="92.1" height="12.8" fill="#fff"/>
<rect x="116" y="43.3" width="90.8" height="12.8" fill="#565656"/>
<circle cx="29" cy="49.4" r="1.3" fill="#e01818"/>
<text x="33.75" y="52.1" font-size="7.5" fill="#484848" textLength="48.2" lengthAdjust="spacingAndGlyphs">Tab Number 1</text>
<path d="M105.2 48.2 L107.8 50.8 M107.8 48.2 L105.2 50.8" stroke="#555" stroke-width="0.9"/>
<text x="125" y="52.1" font-size="7.5" fill="#f2f2f2" textLength="61.5" lengthAdjust="spacingAndGlyphs">2-Bedroom Apar...</text>
<path d="M196.5 48.2 L199.1 50.8 M199.1 48.2 L196.5 50.8" stroke="#f4f4f4" stroke-width="1.1"/>
<path d="M217.7 46.6V51.4M215.3 49H220.1" stroke="#444" stroke-width="1.1"/>
<g fill="none" stroke="#6a6a6a" stroke-width="0.8">
<path d="M9.6 70.9 h2.8 l1.2 4.3 h-5.2 z M11 75.2 v2.6"/>
<rect x="5.4" y="78" width="11.2" height="6.4" rx="0.6"/>
<path d="M5.4 81.2 h11.2 M9.8 79.6 h2.4 M9.8 82.8 h2.4"/>
</g><g fill="#6a6a6a"><circle cx="7.2" cy="85.1" r="0.8"/><circle cx="14.8" cy="85.1" r="0.8"/></g><g fill="none" stroke="#6a6a6a" stroke-width="0.8">
<rect x="4.3" y="100.6" width="14" height="14.4"/>
<path d="M3.8 115.2 h15"/>
<rect x="5.6" y="102" width="4.4" height="12"/><rect x="12.6" y="102" width="4.4" height="12"/>
<path d="M6.8 103.4 v4 M6.8 109 v4 M15.8 103.4 v4 M15.8 109 v4 M5.6 108.2 h4.4 M12.6 108.2 h4.4" stroke-width="0.5"/>
<path d="M11.6 142.4 H3.6 V130.6 H18.6 V145 H14.6 V142.4 M3.6 135.4 H6.8 M8.6 133.2 V137 H13.4 M15.8 134.4 V137 H17.4 M8.6 140.4 V142.4"/>
</g>
<g fill="none" stroke="#6a6a6a" stroke-width="0.7"><path d="M5.3 462.8 H17.8 V467.4 M11.4 473.4 H5.3 V462.8"/><rect x="3.6" y="461.3" width="1.8" height="10.6" rx="0.8"/><path d="M4.4 471.9 Q3.6 473.4 5.3 473.4"/>
<path d="M15.4 460.8 L17 462.4 L10.2 469.2 L8.4 469.6 L8.8 467.8 Z"/><path d="M11.6 474.8 L18.2 467.8 V474.8 Z"/><path d="M15.2 473.2 L16.8 471.6 V473.2Z"/></g>
<filter id="wmb" x="-10%" y="-30%" width="120%" height="160%"><feGaussianBlur stdDeviation="2"/></filter><rect x="612" y="443" width="184" height="30" fill="#fff" opacity="0.6" filter="url(#wmb)"/>
<text x="615.5" y="464.6" font-size="23" font-weight="bold" fill="#dddddd" textLength="176.5" lengthAdjust="spacingAndGlyphs" style="font-family:'Liberation Sans',sans-serif">El Ranking Web</text>
</svg></body></html>
